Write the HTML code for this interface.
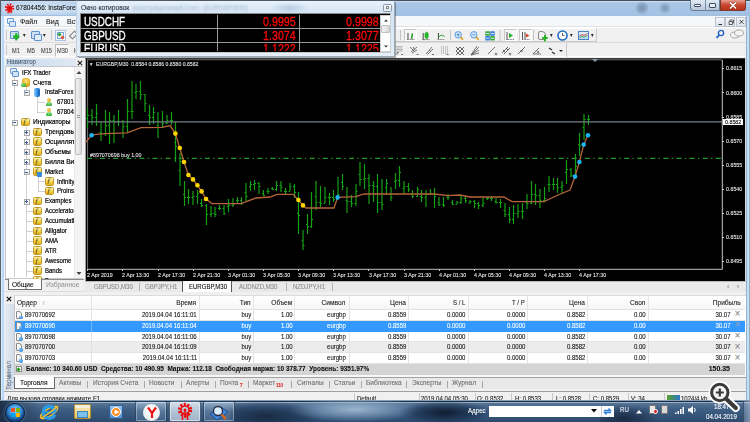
<!DOCTYPE html><html><head><meta charset='utf-8'><style>
*{margin:0;padding:0;box-sizing:border-box}
html,body{width:750px;height:422px;overflow:hidden;background:#b9d1ea;font-family:"Liberation Sans",sans-serif;color:#000}
.a{position:absolute}
.t{position:absolute;white-space:nowrap;font-size:7px;line-height:8px;-webkit-text-stroke:0.1px currentColor}
</style></head><body><div class="a" style="left:0px;top:0px;width:750px;height:17px;background:linear-gradient(#d0e4f8 0,#a8c6e6 12%,#a2c2e4 90%,#9aa5b0 100%);border-top:1px solid #4a4f57"></div>
<div class="a" style="left:2px;top:2px;width:90px;height:13px;background:radial-gradient(ellipse at 45% 50%,rgba(225,238,250,0.85) 0,rgba(215,232,248,0.6) 55%,rgba(200,220,240,0) 100%)"></div>
<div class="a" style="left:0px;top:0px;width:1px;height:422px;background:#5a6068"></div>
<div class="a" style="left:1px;top:16px;width:1px;height:384px;background:#d4eefc"></div>
<div class="a" style="left:2px;top:16px;width:2px;height:384px;background:#b5d8fb"></div>
<div class="a" style="left:746px;top:16px;width:4px;height:384px;background:linear-gradient(90deg,#9ab0c8 0,#9ab0c8 25%,#bde0fc 25%,#bde0fc 75%,#a0aab4 75%)"></div>
<svg class="a" style="left:4px;top:3px" width="11" height="11"><circle cx="5.5" cy="5" r="3.6" fill="none" stroke="#e81010" stroke-width="2.2" stroke-dasharray="1.6 1.2"/><circle cx="5.5" cy="5" r="2.6" fill="#e81010"/><path d="M4 6V10.5M7 6V10.5M5.5 6V9.5" stroke="#e81010" stroke-width="1"/></svg>
<div class="t" style="left:16px;top:4px;font-size:7.6px;color:#111;transform:scaleX(0.85);transform-origin:0 50%;">67804456: InstaForex-Europe.com - Демо Счет - [EURGBP,M30]</div>
<div class="a" style="left:634.8px;top:1px;width:14px;height:14px;background:radial-gradient(circle,rgba(80,100,125,0.55) 0,rgba(90,110,135,0.3) 45%,transparent 72%)"></div>
<div class="a" style="left:659px;top:2px;width:12px;height:12px;background:radial-gradient(circle,rgba(80,100,125,0.5) 0,rgba(90,110,135,0.25) 45%,transparent 72%)"></div>
<div class="a" style="left:690px;top:0px;width:30px;height:11px;background:linear-gradient(#dfe9f4,#b5c8dc);border:1px solid #6d7d91;border-top:none;border-radius:0 0 0 3px"></div>
<div class="a" style="left:705px;top:0px;width:1px;height:11px;background:#7d8ea3"></div>
<div class="a" style="left:694px;top:4px;width:7px;height:3px;border:1px solid #3d4b5c;background:#fff;border-radius:1px"></div>
<div class="a" style="left:709px;top:3px;width:7px;height:5px;border:1px solid #3d4b5c;background:#e8eef5;border-radius:1px"></div>
<div class="a" style="left:720px;top:0px;width:26px;height:11px;background:linear-gradient(#e8a094,#c9462f 50%,#b93318);border:1px solid #7b3a30;border-top:none;border-radius:0 0 3px 0"></div>
<svg class="a" style="left:720px;top:0px" width="26" height="11"><path d="M10 2.5L16 8.5M16 2.5L10 8.5" stroke="#5a2018" stroke-width="2.6" stroke-opacity="0.5"/><path d="M10 2.5L16 8.5M16 2.5L10 8.5" stroke="#fff" stroke-width="1.6"/></svg>
<div class="a" style="left:4px;top:16px;width:742px;height:384px;background:#f0f0f0;border-left:1px solid #a0a8b0;border-right:1px solid #d8dce0"></div>
<div class="a" style="left:4px;top:16px;width:742px;height:11px;background:#f6f7f9;border-bottom:1px solid #dfe3e8"></div>
<div class="a" style="left:7px;top:18px;width:7px;height:6px;border:1px solid #6a9bd8;background:#e6f0fa;border-radius:1px"></div><div class="a" style="left:9px;top:21px;width:7px;height:6px;border:1px solid #6a9bd8;background:#dbe8f7;border-radius:1px"></div>
<div class="t" style="left:20px;top:18px;font-size:7.5px;color:#222;transform:scaleX(0.94);transform-origin:0 50%;">Файл</div>
<div class="t" style="left:46px;top:18px;font-size:7.5px;color:#222;transform:scaleX(0.94);transform-origin:0 50%;">Вид</div>
<div class="t" style="left:67px;top:18px;font-size:7.5px;color:#222;transform:scaleX(0.94);transform-origin:0 50%;">Вставка</div>
<div class="a" style="left:715px;top:17px;width:10px;height:10px;background:linear-gradient(#f6f8fb,#dde4ec);border:1px solid #b9c3cf"></div>
<div class="a" style="left:725px;top:17px;width:10px;height:10px;background:linear-gradient(#f6f8fb,#dde4ec);border:1px solid #b9c3cf"></div>
<div class="a" style="left:736px;top:17px;width:10px;height:10px;background:linear-gradient(#f6f8fb,#dde4ec);border:1px solid #b9c3cf"></div>
<svg class="a" style="left:715px;top:17px" width="31" height="10"><path d="M3.5 7.5H7" stroke="#333" stroke-width="1"/><path d="M14 4.5H17.5V7.5H14ZM15 4.5V3H18.5V6H17.5" stroke="#444" stroke-width="0.8" fill="none"/><path d="M24.5 2.8L28.5 6.8M28.5 2.8L24.5 6.8" stroke="#222" stroke-width="0.9"/></svg>
<div class="a" style="left:4px;top:27px;width:742px;height:30px;background:#f0f0f0"></div>
<div class="a" style="left:4px;top:27px;width:742px;height:1px;background:#fff"></div>
<div class="a" style="left:4px;top:42px;width:742px;height:1px;background:#dcdcdc"></div>
<div class="a" style="left:4px;top:56px;width:742px;height:1px;background:#fff"></div>
<div class="a" style="left:6px;top:30px;width:1px;height:10px;background:#c9c9c9"></div>
<div class="a" style="left:10px;top:31px;width:9px;height:8px;border:1px solid #5b8fd0;background:#cfe0f5;border-radius:1px"></div>
<div class="t" style="left:13px;top:33px;font-size:9px;color:#1fb51f;transform:scaleX(0.86);transform-origin:0 50%;;font-weight:bold">✚</div>
<div class="t" style="left:23px;top:31px;font-size:6px;color:#222;transform:scaleX(0.86);transform-origin:0 50%;">▾</div>
<div class="a" style="left:31px;top:31px;width:9px;height:8px;border:1px solid #5b8fd0;background:#cfe0f5;border-radius:1px"></div>
<div class="a" style="left:34px;top:34px;width:8px;height:7px;border:1px solid #5b8fd0;background:#e1ecf9;border-radius:1px"></div>
<div class="t" style="left:43px;top:31px;font-size:6px;color:#222;transform:scaleX(0.86);transform-origin:0 50%;">▾</div>
<div class="a" style="left:51px;top:30px;width:1px;height:10px;background:#c9c9c9"></div>
<div class="a" style="left:55px;top:30px;width:11px;height:11px;border:1px solid #aac6e6;background:#f7fbff"></div>
<div class="a" style="left:57px;top:32px;width:7px;height:7px;border:1px solid #7aa3d6;background:#f4f8fc"></div>
<div class="a" style="left:58px;top:33px;width:3px;height:3px;background:#2aa02a;transform:rotate(45deg)"></div><div class="a" style="left:61px;top:36px;width:3px;height:3px;background:#e0502a;transform:rotate(45deg)"></div>
<div class="a" style="left:71px;top:31px;width:5px;height:8px;border:1px solid #777;transform:rotate(45deg)"></div>
<div class="a" style="left:6px;top:45px;width:1px;height:10px;background:#c9c9c9"></div>
<div class="t" style="left:12px;top:47px;font-size:6.5px;color:#444;transform:scaleX(0.86);transform-origin:0 50%;">M1</div>
<div class="t" style="left:27px;top:47px;font-size:6.5px;color:#444;transform:scaleX(0.86);transform-origin:0 50%;">M5</div>
<div class="t" style="left:41px;top:47px;font-size:6.5px;color:#444;transform:scaleX(0.86);transform-origin:0 50%;">M15</div>
<div class="a" style="left:55px;top:44px;width:14px;height:13px;border:1px solid #bdbdbd;background:#f8f8f8;border-right-color:#fff;border-bottom-color:#fff"></div>
<div class="t" style="left:57px;top:47px;font-size:6.5px;color:#444;transform:scaleX(0.86);transform-origin:0 50%;">M30</div>
<div class="t" style="left:74px;top:47px;font-size:6.5px;color:#444;transform:scaleX(0.86);transform-origin:0 50%;">H1</div>
<div class="a" style="left:395px;top:28px;width:202px;height:14px;border:1px solid #fff;border-right-color:#c9c9c9;border-bottom-color:#c9c9c9"></div>
<div class="a" style="left:400px;top:30px;width:1px;height:10px;background:#c4c4c4"></div>
<div class="a" style="left:403.6px;top:29.4px;width:13.2px;height:11.2px;border:1px solid #c8c8c8;border-right-color:#fff;border-bottom-color:#fff;background:#f6f6f6"></div>
<svg class="a" style="left:400px;top:27px" width="50" height="16"><path d="M8 6V12.5M23.2 6V13M38.4 6V13" stroke="#444" stroke-width="1"/><path d="M7 12.5H14.5M22.4 12.5H29.6M38 12.5H44.5" stroke="#777" stroke-width="1" stroke-dasharray="1 0.6"/><path d="M11.5 12L12.5 6.5" stroke="#2aa02a" stroke-width="1.6"/><path d="M26.6 4.8L28.2 6.5V10.5L26.6 12L25 10.5V6.5Z" fill="#22c022" stroke="#178a17" stroke-width="0.5"/><path d="M38.5 10.5Q41 6.5 44.5 9.5" stroke="#2aa02a" stroke-width="1" fill="none"/></svg>
<div class="a" style="left:450px;top:30px;width:1px;height:10px;background:#c4c4c4"></div>
<svg class="a" style="left:450px;top:27px" width="80" height="16"><circle cx="8.2" cy="7.8" r="3.2" fill="#d2e8fc" stroke="#4a90d8" stroke-width="0.9"/><path d="M6.8 7.8H9.6M8.2 6.4V9.2" stroke="#3a78c0" stroke-width="0.8"/><path d="M10.5 10.2L13 12.6" stroke="#d8a820" stroke-width="1.8"/><circle cx="23.8" cy="7.8" r="3.2" fill="#d2e8fc" stroke="#4a90d8" stroke-width="0.9"/><path d="M22.4 7.8H25.2" stroke="#3a78c0" stroke-width="0.8"/><path d="M26.1 10.2L28.6 12.6" stroke="#d8a820" stroke-width="1.8"/><rect x="35.3" y="4.3" width="4.6" height="4.4" rx="0.6" fill="#38a848"/><rect x="40.2" y="4.3" width="4.6" height="4.4" rx="0.6" fill="#3a7ed8"/><rect x="35.3" y="9" width="4.6" height="4.4" rx="0.6" fill="#3a7ed8"/><rect x="40.2" y="9" width="4.6" height="4.4" rx="0.6" fill="#38a848"/><path d="M36 6.5H39.2M41 6.5H44.2M36 11.2H39.2M41 11.2H44.2" stroke="#fff" stroke-width="0.8"/><path d="M50 3V14" stroke="#c4c4c4"/></svg>
<div class="a" style="left:503.5px;top:29.4px;width:13px;height:11.2px;border:1px solid #c8c8c8;border-right-color:#fff;border-bottom-color:#fff;background:#f6f6f6"></div>
<div class="a" style="left:518.5px;top:29.4px;width:13px;height:11.2px;border:1px solid #c8c8c8;border-right-color:#fff;border-bottom-color:#fff;background:#f6f6f6"></div>
<svg class="a" style="left:500px;top:27px" width="33" height="16"><path d="M7 5V13M22.5 5V13M25 5V12" stroke="#444" stroke-width="0.9"/><path d="M6.5 12.5H14M22 12.5H29.5" stroke="#777" stroke-width="1" stroke-dasharray="1 0.6"/><path d="M9 6L13 8.5L9 11Z" fill="#22b022"/><path d="M26 6.5L29.5 8.5L26 10.5Z" fill="#e04020"/></svg>
<div class="a" style="left:533px;top:30px;width:1px;height:10px;background:#c4c4c4"></div>
<div class="a" style="left:538px;top:31px;width:8px;height:9px;border:1px solid #8a8a8a;background:#f3f3f3;border-radius:2px 4px 2px 2px"></div>
<div class="t" style="left:542px;top:35px;font-size:8px;color:#22b422;transform:scaleX(0.86);transform-origin:0 50%;;font-weight:bold">✚</div>
<div class="t" style="left:550px;top:31px;font-size:6px;color:#222;transform:scaleX(0.86);transform-origin:0 50%;">▾</div>
<svg class="a" style="left:557px;top:30px" width="11" height="11"><circle cx="5.5" cy="5.5" r="4.5" fill="#fff" stroke="#1d6cc0" stroke-width="1.6"/><path d="M5.5 3V5.5H7.5" stroke="#333" stroke-width="0.8" fill="none"/></svg>
<div class="t" style="left:570px;top:31px;font-size:6px;color:#222;transform:scaleX(0.86);transform-origin:0 50%;">▾</div>
<div class="a" style="left:578px;top:31px;width:11px;height:9px;border:1px solid #4a82c4;background:linear-gradient(#e4f0fb,#b9d8f4)"></div>
<svg class="a" style="left:579px;top:32px" width="9" height="7"><path d="M0.5 4L3 2.5L5 3.5L8.5 1.5" stroke="#d04040" stroke-width="0.9" fill="none"/><path d="M0.5 5.5L3 4.5L5 5.2L8.5 3.5" stroke="#3aa03a" stroke-width="0.9" fill="none"/></svg>
<div class="t" style="left:591px;top:31px;font-size:6px;color:#222;transform:scaleX(0.86);transform-origin:0 50%;">▾</div>
<div class="a" style="left:566px;top:43px;width:1px;height:14px;background:#c9c9c9"></div>
<svg class="a" style="left:394px;top:42px" width="175" height="16"><g fill="none" stroke-width="0.8"><path d="M2 4.5H8.5M2 6H8.5M2 7.5H8.5M2 9H8.5" stroke="#aaa"/><path d="M3 13V10.5H5M7 12L8 13L9 12" stroke="#555"/><path d="M16 5L20 9M19 5L21 8M17 10L23 5M18 11L23 8" stroke="#555"/><path d="M22.5 12L23.5 13L24.5 12" stroke="#444"/><path d="M32 12L38 5M33.5 12.5L39 7M35 8L37 10" stroke="#555"/><path d="M38 12L39 13L40 12" stroke="#444"/><path d="M47.5 4V12M49.5 4V12M51.5 4V12M53.5 4V12" stroke="#b8b8b8"/><path d="M52.5 12L53.5 13L54.5 12" stroke="#444"/><path d="M62 5L70 13M62 9L66 13M66 5L70 9M62 13L70 5M62 9L66 5M66 13L70 9" stroke="#444"/><path d="M77 13L85 5M77 13L85 8M77 13L83 4M77 13L85 11" stroke="#555"/><path d="M94 12L101 5" stroke="#555"/><circle cx="102" cy="12" r="0.9" stroke="#555"/><path d="M108 11L114 5M110 12L116 6M109 8L111 10M112 6L114 8" stroke="#444"/><circle cx="116" cy="12" r="0.9" stroke="#555"/><path d="M124 12L131 5M126 9L129 9" stroke="#444"/><path d="M139 12H147M139 12L145 6" stroke="#555"/><circle cx="144" cy="10" r="0.8" stroke="#555"/><path d="M155 6L158 8M158 10L161 12" stroke="#333" stroke-width="1.3"/></g><path d="M165 8H169L167 10Z" fill="#222"/></svg>
<svg class="a" style="left:715px;top:29px" width="10" height="10"><circle cx="6" cy="4" r="2.6" fill="none" stroke="#1f5fc8" stroke-width="1.4"/><path d="M4.2 6L1.5 8.8" stroke="#1f5fc8" stroke-width="1.8"/></svg>
<svg class="a" style="left:729px;top:28px" width="16" height="12"><ellipse cx="6" cy="7" rx="4.5" ry="3" fill="#f4f4f4" stroke="#999" stroke-width="0.8"/><ellipse cx="10" cy="5" rx="4.5" ry="3" fill="#f4f4f4" stroke="#999" stroke-width="0.8"/></svg>
<div class="a" style="left:4px;top:57px;width:81px;height:235px;background:#f0f0f0"></div>
<div class="a" style="left:6px;top:58.6px;width:70px;height:7.4px;background:linear-gradient(90deg,#c6d8ec,#dfe9f4)"></div>
<div class="t" style="left:7px;top:58px;font-size:7px;color:#4a5a6e;transform:scaleX(0.86);transform-origin:0 50%;">Навигатор</div>
<svg class="a" style="left:77px;top:59.5px" width="6" height="6"><path d="M0.8 0.8L5.2 5.2M5.2 0.8L0.8 5.2" stroke="#222" stroke-width="1.2"/></svg>
<div class="a" style="left:5px;top:66px;width:78px;height:213px;background:#fff;border:1px solid #c8c8c8"></div>
<div class="a" style="left:74px;top:67px;width:9px;height:211px;background:#f4f4f4;border-left:1px solid #eaeaea"></div>
<svg class="a" style="left:76px;top:70px" width="6" height="5"><path d="M0.5 4H5.5L3 1Z" fill="#444"/></svg>
<div class="a" style="left:75px;top:78px;width:7px;height:77px;background:linear-gradient(90deg,#f2f2f2,#dadada);border:1px solid #bdbdbd;border-radius:2px"></div>
<div class="a" style="left:77px;top:115px;width:3px;height:1px;background:#999"></div><div class="a" style="left:77px;top:117px;width:3px;height:1px;background:#999"></div>
<svg class="a" style="left:76px;top:271px" width="6" height="5"><path d="M0.5 1H5.5L3 4Z" fill="#444"/></svg>
<div class="a" style="left:14px;top:77px;width:1px;height:200px;background:#d0d0d0"></div>
<div class="a" style="left:26px;top:87px;width:1px;height:4px;background:#d0d0d0"></div>
<div class="a" style="left:37px;top:97px;width:1px;height:16px;background:#d0d0d0"></div>
<div class="a" style="left:37px;top:102px;width:8px;height:1px;background:#d0d0d0"></div><div class="a" style="left:37px;top:112px;width:8px;height:1px;background:#d0d0d0"></div>
<div class="a" style="left:26px;top:127px;width:1px;height:150px;background:#d0d0d0"></div>
<div class="a" style="left:38px;top:176px;width:1px;height:16px;background:#d0d0d0"></div>
<div class="a" style="left:38px;top:181px;width:7px;height:1px;background:#d0d0d0"></div><div class="a" style="left:38px;top:191px;width:7px;height:1px;background:#d0d0d0"></div>
<div class="a" style="left:26px;top:211px;width:7px;height:1px;background:#d0d0d0"></div>
<div class="a" style="left:26px;top:221px;width:7px;height:1px;background:#d0d0d0"></div>
<div class="a" style="left:26px;top:231px;width:7px;height:1px;background:#d0d0d0"></div>
<div class="a" style="left:26px;top:241px;width:7px;height:1px;background:#d0d0d0"></div>
<div class="a" style="left:26px;top:251px;width:7px;height:1px;background:#d0d0d0"></div>
<div class="a" style="left:26px;top:261px;width:7px;height:1px;background:#d0d0d0"></div>
<div class="a" style="left:26px;top:271px;width:7px;height:1px;background:#d0d0d0"></div>
<div class="a" style="left:5px;top:66px;width:69px;height:213px;overflow:hidden"><div class="a" style="left:-5px;top:-66px;width:80px;height:300px"><div class="a" style="left:10px;top:68.1px;width:7px;height:6px;border:1px solid #6a9bd8;background:#e6f0fa;border-radius:1px"></div><div class="a" style="left:12px;top:71.1px;width:7px;height:6px;border:1px solid #5b8fd0;background:#d3e4f6;border-radius:1px"></div><div class="t" style="left:22px;top:68.6px;font-size:7px;color:#000;transform:scaleX(0.86);transform-origin:0 50%;-webkit-text-stroke:0.2px #000">IFX Trader</div><div class="a" style="left:11.5px;top:80.0px;width:6px;height:6px;border:1px solid #a9a9a9;background:linear-gradient(#fff,#e9ebee)"></div><div class="a" style="left:13px;top:82.5px;width:3px;height:1px;background:#3a5e9a"></div><div class="a" style="left:22px;top:77.5px;width:8px;height:9px;background:radial-gradient(circle at 50% 35%,#ffe680 0,#e6b020 55%,#b07a10 100%);border-radius:3px"></div><div class="a" style="left:20.5px;top:82.5px;width:5px;height:4.5px;background:radial-gradient(circle at 40% 30%,#7fe07f,#1f9a1f);border-radius:50% 50% 40% 40%"></div><div class="t" style="left:33px;top:78.5px;font-size:7px;color:#000;transform:scaleX(0.94);transform-origin:0 50%;-webkit-text-stroke:0.2px #000">Счета</div><div class="a" style="left:23.5px;top:89.9px;width:6px;height:6px;border:1px solid #a9a9a9;background:linear-gradient(#fff,#e9ebee)"></div><div class="a" style="left:25px;top:92.4px;width:3px;height:1px;background:#3a5e9a"></div><div class="a" style="left:34px;top:87.9px;width:6px;height:9.5px;background:linear-gradient(90deg,#8cccff,#2a86e0 60%,#1460b8);border-radius:2px"></div><div class="t" style="left:45px;top:88.4px;font-size:7px;color:#000;transform:scaleX(0.86);transform-origin:0 50%;-webkit-text-stroke:0.2px #000">InstaForex</div><div class="a" style="left:46.5px;top:97.8px;width:4.5px;height:4.5px;background:radial-gradient(circle at 40% 35%,#ffd860,#d09010);border-radius:50%"></div><div class="a" style="left:45.5px;top:101.8px;width:6.5px;height:4.5px;background:radial-gradient(circle at 50% 20%,#8fe88f,#1e9e1e);border-radius:3px 3px 1px 1px"></div><div class="t" style="left:57px;top:98.3px;font-size:7px;color:#000;transform:scaleX(0.86);transform-origin:0 50%;-webkit-text-stroke:0.2px #000">678010</div><div class="a" style="left:46.5px;top:107.7px;width:4.5px;height:4.5px;background:radial-gradient(circle at 40% 35%,#ffd860,#d09010);border-radius:50%"></div><div class="a" style="left:45.5px;top:111.7px;width:6.5px;height:4.5px;background:radial-gradient(circle at 50% 20%,#8fe88f,#1e9e1e);border-radius:3px 3px 1px 1px"></div><div class="t" style="left:57px;top:108.2px;font-size:7px;color:#000;transform:scaleX(0.86);transform-origin:0 50%;-webkit-text-stroke:0.2px #000">67804456</div><div class="a" style="left:11.5px;top:119.6px;width:6px;height:6px;border:1px solid #a9a9a9;background:linear-gradient(#fff,#e9ebee)"></div><div class="a" style="left:13px;top:122.1px;width:3px;height:1px;background:#3a5e9a"></div><div class="a" style="left:21px;top:117.6px;width:8.5px;height:8.5px;background:linear-gradient(#fff3b0,#f0cf40 60%,#e0b020);border:1px solid #c09a28;border-radius:1.5px"></div><div class="t" style="left:23.6px;top:117.89999999999999px;font-size:7px;color:#4a3a00;font-style:italic;font-family:Liberation Serif">f</div><div class="t" style="left:33px;top:118.1px;font-size:7px;color:#000;transform:scaleX(0.94);transform-origin:0 50%;-webkit-text-stroke:0.2px #000">Индикаторы</div><div class="a" style="left:23.5px;top:129.5px;width:6px;height:6px;border:1px solid #a9a9a9;background:linear-gradient(#fff,#e9ebee)"></div><div class="a" style="left:25px;top:132.0px;width:3px;height:1px;background:#3a5e9a"></div><div class="a" style="left:26px;top:131.0px;width:1px;height:3px;background:#3a5e9a"></div><div class="a" style="left:33px;top:127.5px;width:8.5px;height:8.5px;background:linear-gradient(#fff3b0,#f0cf40 60%,#e0b020);border:1px solid #c09a28;border-radius:1.5px"></div><div class="t" style="left:35.6px;top:127.8px;font-size:7px;color:#4a3a00;font-style:italic;font-family:Liberation Serif">f</div><div class="t" style="left:45px;top:128.0px;font-size:7px;color:#000;transform:scaleX(0.94);transform-origin:0 50%;-webkit-text-stroke:0.2px #000">Трендовые</div><div class="a" style="left:23.5px;top:139.4px;width:6px;height:6px;border:1px solid #a9a9a9;background:linear-gradient(#fff,#e9ebee)"></div><div class="a" style="left:25px;top:141.9px;width:3px;height:1px;background:#3a5e9a"></div><div class="a" style="left:26px;top:140.9px;width:1px;height:3px;background:#3a5e9a"></div><div class="a" style="left:33px;top:137.4px;width:8.5px;height:8.5px;background:linear-gradient(#fff3b0,#f0cf40 60%,#e0b020);border:1px solid #c09a28;border-radius:1.5px"></div><div class="t" style="left:35.6px;top:137.70000000000002px;font-size:7px;color:#4a3a00;font-style:italic;font-family:Liberation Serif">f</div><div class="t" style="left:45px;top:137.9px;font-size:7px;color:#000;transform:scaleX(0.94);transform-origin:0 50%;-webkit-text-stroke:0.2px #000">Осцилляторы</div><div class="a" style="left:23.5px;top:149.3px;width:6px;height:6px;border:1px solid #a9a9a9;background:linear-gradient(#fff,#e9ebee)"></div><div class="a" style="left:25px;top:151.8px;width:3px;height:1px;background:#3a5e9a"></div><div class="a" style="left:26px;top:150.8px;width:1px;height:3px;background:#3a5e9a"></div><div class="a" style="left:33px;top:147.3px;width:8.5px;height:8.5px;background:linear-gradient(#fff3b0,#f0cf40 60%,#e0b020);border:1px solid #c09a28;border-radius:1.5px"></div><div class="t" style="left:35.6px;top:147.60000000000002px;font-size:7px;color:#4a3a00;font-style:italic;font-family:Liberation Serif">f</div><div class="t" style="left:45px;top:147.8px;font-size:7px;color:#000;transform:scaleX(0.94);transform-origin:0 50%;-webkit-text-stroke:0.2px #000">Объемы</div><div class="a" style="left:23.5px;top:159.2px;width:6px;height:6px;border:1px solid #a9a9a9;background:linear-gradient(#fff,#e9ebee)"></div><div class="a" style="left:25px;top:161.7px;width:3px;height:1px;background:#3a5e9a"></div><div class="a" style="left:26px;top:160.7px;width:1px;height:3px;background:#3a5e9a"></div><div class="a" style="left:33px;top:157.2px;width:8.5px;height:8.5px;background:linear-gradient(#fff3b0,#f0cf40 60%,#e0b020);border:1px solid #c09a28;border-radius:1.5px"></div><div class="t" style="left:35.6px;top:157.5px;font-size:7px;color:#4a3a00;font-style:italic;font-family:Liberation Serif">f</div><div class="t" style="left:45px;top:157.7px;font-size:7px;color:#000;transform:scaleX(0.94);transform-origin:0 50%;-webkit-text-stroke:0.2px #000">Билла Вильямса</div><div class="a" style="left:23.5px;top:169.1px;width:6px;height:6px;border:1px solid #a9a9a9;background:linear-gradient(#fff,#e9ebee)"></div><div class="a" style="left:25px;top:171.6px;width:3px;height:1px;background:#3a5e9a"></div><div class="a" style="left:33px;top:167.1px;width:8.5px;height:8.5px;background:linear-gradient(#fff3b0,#f0cf40 60%,#e0b020);border:1px solid #c09a28;border-radius:1.5px"></div><div class="t" style="left:35.6px;top:167.4px;font-size:7px;color:#4a3a00;font-style:italic;font-family:Liberation Serif">f</div><div class="a" style="left:37px;top:171.6px;width:5px;height:5px;background:#3a88d8;border-radius:1px"></div><div class="t" style="left:45px;top:167.6px;font-size:7px;color:#000;transform:scaleX(0.86);transform-origin:0 50%;-webkit-text-stroke:0.2px #000">Market</div><div class="a" style="left:45px;top:177.0px;width:8.5px;height:8.5px;background:linear-gradient(#fff3b0,#f0cf40 60%,#e0b020);border:1px solid #c09a28;border-radius:1.5px"></div><div class="t" style="left:47.6px;top:177.3px;font-size:7px;color:#4a3a00;font-style:italic;font-family:Liberation Serif">f</div><div class="t" style="left:57px;top:177.5px;font-size:7px;color:#000;transform:scaleX(0.86);transform-origin:0 50%;-webkit-text-stroke:0.2px #000">Infinity</div><div class="a" style="left:45px;top:186.9px;width:8.5px;height:8.5px;background:linear-gradient(#fff3b0,#f0cf40 60%,#e0b020);border:1px solid #c09a28;border-radius:1.5px"></div><div class="t" style="left:47.6px;top:187.20000000000002px;font-size:7px;color:#4a3a00;font-style:italic;font-family:Liberation Serif">f</div><div class="t" style="left:57px;top:187.4px;font-size:7px;color:#000;transform:scaleX(0.86);transform-origin:0 50%;-webkit-text-stroke:0.2px #000">Proinside</div><div class="a" style="left:23.5px;top:198.8px;width:6px;height:6px;border:1px solid #a9a9a9;background:linear-gradient(#fff,#e9ebee)"></div><div class="a" style="left:25px;top:201.3px;width:3px;height:1px;background:#3a5e9a"></div><div class="a" style="left:26px;top:200.3px;width:1px;height:3px;background:#3a5e9a"></div><div class="a" style="left:33px;top:196.8px;width:8.5px;height:8.5px;background:linear-gradient(#fff3b0,#f0cf40 60%,#e0b020);border:1px solid #c09a28;border-radius:1.5px"></div><div class="t" style="left:35.6px;top:197.10000000000002px;font-size:7px;color:#4a3a00;font-style:italic;font-family:Liberation Serif">f</div><div class="t" style="left:45px;top:197.3px;font-size:7px;color:#000;transform:scaleX(0.86);transform-origin:0 50%;-webkit-text-stroke:0.2px #000">Examples</div><div class="a" style="left:33px;top:206.7px;width:8.5px;height:8.5px;background:linear-gradient(#fff3b0,#f0cf40 60%,#e0b020);border:1px solid #c09a28;border-radius:1.5px"></div><div class="t" style="left:35.6px;top:207.0px;font-size:7px;color:#4a3a00;font-style:italic;font-family:Liberation Serif">f</div><div class="t" style="left:45px;top:207.2px;font-size:7px;color:#000;transform:scaleX(0.86);transform-origin:0 50%;-webkit-text-stroke:0.2px #000">Accelerator</div><div class="a" style="left:33px;top:216.6px;width:8.5px;height:8.5px;background:linear-gradient(#fff3b0,#f0cf40 60%,#e0b020);border:1px solid #c09a28;border-radius:1.5px"></div><div class="t" style="left:35.6px;top:216.9px;font-size:7px;color:#4a3a00;font-style:italic;font-family:Liberation Serif">f</div><div class="t" style="left:45px;top:217.1px;font-size:7px;color:#000;transform:scaleX(0.86);transform-origin:0 50%;-webkit-text-stroke:0.2px #000">Accumulation</div><div class="a" style="left:33px;top:226.5px;width:8.5px;height:8.5px;background:linear-gradient(#fff3b0,#f0cf40 60%,#e0b020);border:1px solid #c09a28;border-radius:1.5px"></div><div class="t" style="left:35.6px;top:226.8px;font-size:7px;color:#4a3a00;font-style:italic;font-family:Liberation Serif">f</div><div class="t" style="left:45px;top:227.0px;font-size:7px;color:#000;transform:scaleX(0.86);transform-origin:0 50%;-webkit-text-stroke:0.2px #000">Alligator</div><div class="a" style="left:33px;top:236.4px;width:8.5px;height:8.5px;background:linear-gradient(#fff3b0,#f0cf40 60%,#e0b020);border:1px solid #c09a28;border-radius:1.5px"></div><div class="t" style="left:35.6px;top:236.70000000000002px;font-size:7px;color:#4a3a00;font-style:italic;font-family:Liberation Serif">f</div><div class="t" style="left:45px;top:236.9px;font-size:7px;color:#000;transform:scaleX(0.86);transform-origin:0 50%;-webkit-text-stroke:0.2px #000">AMA</div><div class="a" style="left:33px;top:246.3px;width:8.5px;height:8.5px;background:linear-gradient(#fff3b0,#f0cf40 60%,#e0b020);border:1px solid #c09a28;border-radius:1.5px"></div><div class="t" style="left:35.6px;top:246.60000000000002px;font-size:7px;color:#4a3a00;font-style:italic;font-family:Liberation Serif">f</div><div class="t" style="left:45px;top:246.8px;font-size:7px;color:#000;transform:scaleX(0.86);transform-origin:0 50%;-webkit-text-stroke:0.2px #000">ATR</div><div class="a" style="left:33px;top:256.2px;width:8.5px;height:8.5px;background:linear-gradient(#fff3b0,#f0cf40 60%,#e0b020);border:1px solid #c09a28;border-radius:1.5px"></div><div class="t" style="left:35.6px;top:256.5px;font-size:7px;color:#4a3a00;font-style:italic;font-family:Liberation Serif">f</div><div class="t" style="left:45px;top:256.7px;font-size:7px;color:#000;transform:scaleX(0.86);transform-origin:0 50%;-webkit-text-stroke:0.2px #000">Awesome</div><div class="a" style="left:33px;top:266.1px;width:8.5px;height:8.5px;background:linear-gradient(#fff3b0,#f0cf40 60%,#e0b020);border:1px solid #c09a28;border-radius:1.5px"></div><div class="t" style="left:35.6px;top:266.40000000000003px;font-size:7px;color:#4a3a00;font-style:italic;font-family:Liberation Serif">f</div><div class="t" style="left:45px;top:266.6px;font-size:7px;color:#000;transform:scaleX(0.86);transform-origin:0 50%;-webkit-text-stroke:0.2px #000">Bands</div><div class="a" style="left:33px;top:276.0px;width:8.5px;height:8.5px;background:linear-gradient(#fff3b0,#f0cf40 60%,#e0b020);border:1px solid #c09a28;border-radius:1.5px"></div><div class="t" style="left:35.6px;top:276.3px;font-size:7px;color:#4a3a00;font-style:italic;font-family:Liberation Serif">f</div><div class="t" style="left:45px;top:276.5px;font-size:7px;color:#000;transform:scaleX(0.86);transform-origin:0 50%;-webkit-text-stroke:0.2px #000">Bears</div></div></div>
<div class="a" style="left:5px;top:279px;width:79px;height:13px;background:#f0f0f0"></div>
<div class="a" style="left:5px;top:279px;width:79px;height:1px;background:#8c8c8c"></div>
<div class="a" style="left:8px;top:279px;width:34px;height:11px;background:#fff;border:1px solid #6e6e6e;border-top:none;border-right-width:1.5px;border-bottom-width:1.5px"></div>
<div class="t" style="left:12px;top:280.5px;font-size:7px;color:#111;transform:scaleX(0.94);transform-origin:0 50%;">Общие</div>
<div class="t" style="left:46px;top:280.5px;font-size:7px;color:#999;transform:scaleX(0.94);transform-origin:0 50%;">Избранное</div>
<div class="a" style="left:4px;top:291px;width:81px;height:1px;background:#dedede"></div>
<div class="a" style="left:85px;top:57.5px;width:659.5px;height:223.5px;background:#000;border-left:1px solid #a0a0a0;border-top:1px solid #3a3a3a"></div>
<svg class="a" style="left:0;top:0" width="750" height="282"><path d="M87.5 269.5V59.8H722.3" fill="none" stroke="#6a6a6a" stroke-width="1.1"/><path d="M87.5 269.3H722.3" stroke="#c0c0c0" stroke-width="1"/><path d="M87 158.4H722" stroke="#1f9a1f" stroke-width="1.2" stroke-dasharray="5 3.4 1.3 3.4"/><path d="M87.5 108.0V128.0M86.0 118.5H87.5M87.5 115.5H89.0M92.0 109.0V125.0M90.5 115.5H92.0M92.0 117.5H93.5M96.5 104.0V126.0M95.0 117.5H96.5M96.5 113.5H98.0M101.0 122.0V141.0M99.5 132.5H101.0M101.0 133.5H102.5M105.5 110.0V136.0M104.0 133.5H105.5M105.5 125.5H107.0M109.5 112.0V144.0M108.0 125.5H109.5M109.5 120.5H111.0M114.0 115.0V143.0M112.5 120.5H114.0M114.0 121.5H115.5M118.5 110.0V126.0M117.0 121.5H118.5M118.5 121.5H120.0M123.0 120.0V138.0M121.5 121.5H123.0M123.0 126.5H124.5M127.5 99.0V133.0M126.0 126.5H127.5M127.5 111.5H129.0M132.0 81.0V119.0M130.5 111.5H132.0M132.0 111.5H133.5M136.0 84.0V99.0M134.5 92.5H136.0M136.0 91.5H137.5M140.5 81.0V100.0M139.0 91.5H140.5M140.5 94.5H142.0M145.0 94.0V112.0M143.5 94.5H145.0M145.0 103.5H146.5M149.5 105.0V125.0M148.0 115.5H149.5M149.5 117.5H151.0M153.5 107.0V124.0M152.0 117.5H153.5M153.5 112.5H155.0M158.0 112.0V138.0M156.5 125.5H158.0M158.0 127.5H159.5M162.5 111.0V128.0M161.0 127.5H162.5M162.5 123.5H164.0M167.0 115.0V124.0M165.5 123.5H167.0M167.0 120.5H168.5M171.5 112.0V125.0M170.0 120.5H171.5M171.5 120.5H173.0M175.5 122.0V162.0M174.0 142.5H175.5M175.5 146.5H177.0M180.0 153.0V186.0M178.5 170.5H180.0M180.0 161.5H181.5M184.5 181.0V206.0M183.0 194.5H184.5M184.5 197.5H186.0M188.5 189.0V204.0M187.0 197.5H188.5M188.5 197.5H190.0M193.0 191.0V205.0M191.5 197.5H193.0M193.0 196.5H194.5M197.5 190.0V204.0M196.0 196.5H197.5M197.5 193.5H199.0M201.5 199.0V207.0M200.0 203.5H201.5M201.5 205.5H203.0M206.5 204.0V225.0M205.0 205.5H206.5M206.5 214.5H208.0M211.0 206.0V217.0M209.5 214.5H211.0M211.0 213.5H212.5M215.0 207.0V217.0M213.5 213.5H215.0M215.0 214.5H216.5M219.5 205.0V210.0M218.0 208.5H219.5M219.5 208.5H221.0M224.0 205.0V215.0M222.5 208.5H224.0M224.0 213.5H225.5M228.5 199.0V212.0M227.0 206.5H228.5M228.5 205.5H230.0M233.0 198.0V207.0M231.5 205.5H233.0M233.0 204.5H234.5M237.5 197.0V204.0M236.0 200.5H237.5M237.5 200.5H239.0M241.5 197.0V205.0M240.0 200.5H241.5M241.5 203.5H243.0M246.0 183.0V201.0M244.5 192.5H246.0M246.0 196.5H247.5M250.5 181.0V191.0M249.0 186.5H250.5M250.5 184.5H252.0M254.5 180.0V190.0M253.0 184.5H254.5M254.5 183.5H256.0M259.0 182.0V194.0M257.5 183.5H259.0M259.0 186.5H260.5M263.5 190.0V196.0M262.0 193.5H263.5M263.5 195.5H265.0M268.0 188.0V194.0M266.5 191.5H268.0M268.0 191.5H269.5M272.5 187.0V190.0M271.0 188.5H272.5M272.5 189.5H274.0M276.5 181.0V191.0M275.0 189.5H276.5M276.5 185.5H278.0M281.0 181.0V192.0M279.5 185.5H281.0M281.0 187.5H282.5M285.5 188.0V194.0M284.0 191.5H285.5M285.5 191.5H287.0M290.0 183.0V191.0M288.5 191.5H290.0M290.0 186.5H291.5M294.5 184.0V198.0M293.0 186.5H294.5M294.5 192.5H296.0M298.5 192.0V234.0M297.0 213.5H298.5M298.5 215.5H300.0M303.0 230.0V250.0M301.5 240.5H303.0M303.0 245.5H304.5M307.5 214.0V234.0M306.0 224.5H307.5M307.5 226.5H309.0M311.5 192.0V228.0M310.0 226.5H311.5M311.5 219.5H313.0M316.0 181.0V210.0M314.5 196.5H316.0M316.0 202.5H317.5M320.5 186.0V207.0M319.0 202.5H320.5M320.5 203.5H322.0M325.0 187.0V203.0M323.5 203.5H325.0M325.0 197.5H326.5M329.5 193.0V205.0M328.0 197.5H329.5M329.5 197.5H331.0M333.5 190.0V202.0M332.0 197.5H333.5M333.5 199.5H335.0M338.0 177.0V199.0M336.5 199.5H338.0M338.0 194.5H339.5M342.5 174.0V190.0M341.0 182.5H342.5M342.5 186.5H344.0M347.0 187.0V213.0M345.5 200.5H347.0M347.0 201.5H348.5M351.5 195.0V207.0M350.0 201.5H351.5M351.5 203.5H353.0M356.0 184.0V206.0M354.5 203.5H356.0M356.0 191.5H357.5M360.0 162.0V186.0M358.5 174.5H360.0M360.0 179.5H361.5M364.5 164.0V189.0M363.0 179.5H364.5M364.5 178.5H366.0M369.0 174.0V204.0M367.5 178.5H369.0M369.0 185.5H370.5M373.5 181.0V202.0M372.0 185.5H373.5M373.5 186.5H375.0M377.5 174.0V213.0M376.0 186.5H377.5M377.5 202.5H379.0M382.0 179.0V210.0M380.5 202.5H382.0M382.0 204.5H383.5M386.5 179.0V195.0M385.0 187.5H386.5M386.5 183.5H388.0M391.0 187.0V201.0M389.5 194.5H391.0M391.0 197.5H392.5M395.5 173.0V189.0M394.0 181.5H395.5M395.5 180.5H397.0M399.5 166.0V187.0M398.0 180.5H399.5M399.5 172.5H401.0M404.0 181.0V194.0M402.5 188.5H404.0M404.0 186.5H405.5M408.5 183.0V192.0M407.0 186.5H408.5M408.5 189.5H410.0M412.5 190.0V198.0M411.0 194.5H412.5M412.5 196.5H414.0M417.5 187.0V197.0M416.0 196.5H417.5M417.5 189.5H419.0M421.5 190.0V202.0M420.0 196.5H421.5M421.5 197.5H423.0M426.0 190.0V207.0M424.5 197.5H426.0M426.0 194.5H427.5M430.5 189.0V195.0M429.0 194.5H430.5M430.5 193.5H432.0M434.5 188.0V208.0M433.0 193.5H434.5M434.5 196.5H436.0M439.0 197.0V206.0M437.5 202.5H439.0M439.0 204.5H440.5M443.5 197.0V207.0M442.0 204.5H443.5M443.5 205.5H445.0M448.0 194.0V200.0M446.5 197.5H448.0M448.0 197.5H449.5M452.5 200.0V205.0M451.0 202.5H452.5M452.5 204.5H454.0M457.0 201.0V204.0M455.5 204.5H457.0M457.0 202.5H458.5M461.0 196.0V204.0M459.5 202.5H461.0M461.0 198.5H462.5M465.5 196.0V203.0M464.0 198.5H465.5M465.5 200.5H467.0M470.0 200.0V204.0M468.5 202.5H470.0M470.0 201.5H471.5M474.5 200.0V208.0M473.0 201.5H474.5M474.5 203.5H476.0M478.5 202.0V209.0M477.0 203.5H478.5M478.5 205.5H480.0M483.0 198.0V207.0M481.5 205.5H483.0M483.0 203.5H484.5M487.5 197.0V200.0M486.0 198.5H487.5M487.5 198.5H489.0M491.5 197.0V201.0M490.0 198.5H491.5M491.5 198.5H493.0M496.0 198.0V204.0M494.5 201.5H496.0M496.0 202.5H497.5M500.5 199.0V208.0M499.0 202.5H500.5M500.5 202.5H502.0M505.0 203.0V217.0M503.5 210.5H505.0M505.0 214.5H506.5M509.5 207.0V223.0M508.0 214.5H509.5M509.5 219.5H511.0M513.5 205.0V224.0M512.0 219.5H513.5M513.5 213.5H515.0M518.0 204.0V218.0M516.5 213.5H518.0M518.0 211.5H519.5M522.5 203.0V219.0M521.0 211.5H522.5M522.5 211.5H524.0M527.0 194.0V209.0M525.5 202.5H527.0M527.0 203.5H528.5M531.5 181.0V204.0M530.0 203.5H531.5M531.5 194.5H533.0M535.5 184.0V205.0M534.0 194.5H535.5M535.5 195.5H537.0M540.0 189.0V208.0M538.5 195.5H540.0M540.0 200.5H541.5M544.5 187.0V201.0M543.0 200.5H544.5M544.5 198.5H546.0M549.0 176.0V192.0M547.5 184.5H549.0M549.0 184.5H550.5M553.5 178.0V190.0M552.0 184.5H553.5M553.5 184.5H555.0M557.5 178.0V193.0M556.0 184.5H557.5M557.5 187.5H559.0M562.0 181.0V193.0M560.5 187.5H562.0M562.0 185.5H563.5M566.5 160.0V184.0M565.0 172.5H566.5M566.5 169.5H568.0M571.0 168.0V177.0M569.5 169.5H571.0M571.0 175.5H572.5M575.5 154.0V178.0M574.0 175.5H575.5M575.5 166.5H577.0M579.5 133.0V156.0M578.0 144.5H579.5M579.5 145.5H581.0M584.0 114.0V140.0M582.5 127.5H584.0M584.0 119.5H585.5M588.5 115.0V125.0M587.0 119.5H588.5M588.5 119.5H590.0" stroke="#14a014" stroke-width="1.2" fill="none"/>
<polyline points="86,142 91.6,135.2 96,134.4 106,133.6 127,132.8 141,127.6 162,127.4 170,125.6 175.4,133.6 179.8,148 184,162 188.4,175 193,179.4 197.4,185.2 201.6,191.4 206,199 212,203.6 241,203.6 256,198 270,197 277,194.4 293,194.4 298.4,200 303,205.4 306,208 334,208 337.6,197.4 356,196.6 364,194 434,194 448,195.6 460,195 470,197 504,197 512,201.6 544,201.6 558,195 570,190 575,176.6 579.4,162 583.7,144.6 588,135.3" fill="none" stroke="#b5643a" stroke-width="1.3"/>
<circle cx="175.4" cy="133.6" r="2.3" fill="#ffd400"/>
<circle cx="179.8" cy="148" r="2.3" fill="#ffd400"/>
<circle cx="184" cy="162" r="2.3" fill="#ffd400"/>
<circle cx="188.4" cy="175" r="2.3" fill="#ffd400"/>
<circle cx="193" cy="179.4" r="2.3" fill="#ffd400"/>
<circle cx="197.4" cy="185.2" r="2.3" fill="#ffd400"/>
<circle cx="201.6" cy="191.4" r="2.3" fill="#ffd400"/>
<circle cx="206" cy="199" r="2.3" fill="#ffd400"/>
<circle cx="298.4" cy="200" r="2.3" fill="#ffd400"/>
<circle cx="303" cy="205.4" r="2.3" fill="#ffd400"/>
<circle cx="91.6" cy="135.2" r="2.3" fill="#1cb4f4"/>
<circle cx="337.6" cy="197.4" r="2.3" fill="#1cb4f4"/>
<circle cx="575" cy="176.6" r="2.3" fill="#1cb4f4"/>
<circle cx="579.4" cy="162" r="2.3" fill="#1cb4f4"/>
<circle cx="583.7" cy="144.6" r="2.3" fill="#1cb4f4"/>
<circle cx="588" cy="135.3" r="2.3" fill="#1cb4f4"/><path d="M87 121.9H722.5" stroke="#77808a" stroke-width="1.3"/><path d="M722.3 60V269.5" stroke="#c8c8c8" stroke-width="1"/><path d="M592 59H598L595 62Z" fill="#8a9aaa"/></svg>
<div class="t" style="left:89px;top:60.400000000000006px;font-size:5px;color:#ddd;transform:scaleX(0.86);transform-origin:0 50%;">▼</div>
<div class="t" style="left:96px;top:60.400000000000006px;font-size:6.2px;color:#e8e8e8;transform:scaleX(0.83);transform-origin:0 50%;">EURGBP,M30&nbsp; 0.8584 0.8586 0.8580 0.8582</div>
<div class="t" style="left:90px;top:151.4px;font-size:6.2px;color:#e0e0e0;transform:scaleX(0.86);transform-origin:0 50%;">#897070698 buy 1.00</div>
<div class="a" style="left:722px;top:68px;width:2px;height:1px;background:#c8c8c8"></div>
<div class="t" style="left:725.5px;top:64.4px;font-size:6.2px;color:#e6e6e6;transform:scaleX(0.86);transform-origin:0 50%;">0.8615</div>
<div class="a" style="left:722px;top:92px;width:2px;height:1px;background:#c8c8c8"></div>
<div class="t" style="left:725.5px;top:88.5px;font-size:6.2px;color:#e6e6e6;transform:scaleX(0.86);transform-origin:0 50%;">0.8600</div>
<div class="a" style="left:722px;top:117px;width:2px;height:1px;background:#c8c8c8"></div>
<div class="t" style="left:725.5px;top:112.60000000000001px;font-size:6.2px;color:#e6e6e6;transform:scaleX(0.86);transform-origin:0 50%;">0.8585</div>
<div class="a" style="left:722px;top:141px;width:2px;height:1px;background:#c8c8c8"></div>
<div class="t" style="left:725.5px;top:136.70000000000002px;font-size:6.2px;color:#e6e6e6;transform:scaleX(0.86);transform-origin:0 50%;">0.8570</div>
<div class="a" style="left:722px;top:165px;width:2px;height:1px;background:#c8c8c8"></div>
<div class="t" style="left:725.5px;top:160.8px;font-size:6.2px;color:#e6e6e6;transform:scaleX(0.86);transform-origin:0 50%;">0.8555</div>
<div class="a" style="left:722px;top:189px;width:2px;height:1px;background:#c8c8c8"></div>
<div class="t" style="left:725.5px;top:184.9px;font-size:6.2px;color:#e6e6e6;transform:scaleX(0.86);transform-origin:0 50%;">0.8540</div>
<div class="a" style="left:722px;top:213px;width:2px;height:1px;background:#c8c8c8"></div>
<div class="t" style="left:725.5px;top:209.00000000000003px;font-size:6.2px;color:#e6e6e6;transform:scaleX(0.86);transform-origin:0 50%;">0.8525</div>
<div class="a" style="left:722px;top:237px;width:2px;height:1px;background:#c8c8c8"></div>
<div class="t" style="left:725.5px;top:233.10000000000002px;font-size:6.2px;color:#e6e6e6;transform:scaleX(0.86);transform-origin:0 50%;">0.8510</div>
<div class="a" style="left:722px;top:261px;width:2px;height:1px;background:#c8c8c8"></div>
<div class="t" style="left:725.5px;top:257.20000000000005px;font-size:6.2px;color:#e6e6e6;transform:scaleX(0.86);transform-origin:0 50%;">0.8495</div>
<div class="a" style="left:723px;top:119.2px;width:20px;height:5.5px;background:#fff"></div>
<div class="t" style="left:725px;top:117.9px;font-size:6.2px;color:#000;transform:scaleX(0.86);transform-origin:0 50%;">0.8582</div>
<div class="a" style="left:87px;top:269px;width:1px;height:2px;background:#c8c8c8"></div>
<div class="t" style="left:87.3px;top:270.7px;font-size:6.2px;color:#e6e6e6;transform:scaleX(0.86);transform-origin:0 50%;">2 Apr 2019</div>
<div class="a" style="left:122px;top:269px;width:1px;height:2px;background:#c8c8c8"></div>
<div class="t" style="left:122.44999999999999px;top:270.7px;font-size:6.2px;color:#e6e6e6;transform:scaleX(0.86);transform-origin:0 50%;">2 Apr 13:30</div>
<div class="a" style="left:158px;top:269px;width:1px;height:2px;background:#c8c8c8"></div>
<div class="t" style="left:157.6px;top:270.7px;font-size:6.2px;color:#e6e6e6;transform:scaleX(0.86);transform-origin:0 50%;">2 Apr 17:30</div>
<div class="a" style="left:193px;top:269px;width:1px;height:2px;background:#c8c8c8"></div>
<div class="t" style="left:192.75px;top:270.7px;font-size:6.2px;color:#e6e6e6;transform:scaleX(0.86);transform-origin:0 50%;">2 Apr 21:30</div>
<div class="a" style="left:228px;top:269px;width:1px;height:2px;background:#c8c8c8"></div>
<div class="t" style="left:227.89999999999998px;top:270.7px;font-size:6.2px;color:#e6e6e6;transform:scaleX(0.86);transform-origin:0 50%;">3 Apr 01:30</div>
<div class="a" style="left:263px;top:269px;width:1px;height:2px;background:#c8c8c8"></div>
<div class="t" style="left:263.05px;top:270.7px;font-size:6.2px;color:#e6e6e6;transform:scaleX(0.86);transform-origin:0 50%;">3 Apr 05:30</div>
<div class="a" style="left:298px;top:269px;width:1px;height:2px;background:#c8c8c8"></div>
<div class="t" style="left:298.2px;top:270.7px;font-size:6.2px;color:#e6e6e6;transform:scaleX(0.86);transform-origin:0 50%;">3 Apr 09:30</div>
<div class="a" style="left:333px;top:269px;width:1px;height:2px;background:#c8c8c8"></div>
<div class="t" style="left:333.34999999999997px;top:270.7px;font-size:6.2px;color:#e6e6e6;transform:scaleX(0.86);transform-origin:0 50%;">3 Apr 13:30</div>
<div class="a" style="left:368px;top:269px;width:1px;height:2px;background:#c8c8c8"></div>
<div class="t" style="left:368.5px;top:270.7px;font-size:6.2px;color:#e6e6e6;transform:scaleX(0.86);transform-origin:0 50%;">3 Apr 17:30</div>
<div class="a" style="left:404px;top:269px;width:1px;height:2px;background:#c8c8c8"></div>
<div class="t" style="left:403.65px;top:270.7px;font-size:6.2px;color:#e6e6e6;transform:scaleX(0.86);transform-origin:0 50%;">3 Apr 21:30</div>
<div class="a" style="left:439px;top:269px;width:1px;height:2px;background:#c8c8c8"></div>
<div class="t" style="left:438.8px;top:270.7px;font-size:6.2px;color:#e6e6e6;transform:scaleX(0.86);transform-origin:0 50%;">4 Apr 01:30</div>
<div class="a" style="left:474px;top:269px;width:1px;height:2px;background:#c8c8c8"></div>
<div class="t" style="left:473.95px;top:270.7px;font-size:6.2px;color:#e6e6e6;transform:scaleX(0.86);transform-origin:0 50%;">4 Apr 05:30</div>
<div class="a" style="left:509px;top:269px;width:1px;height:2px;background:#c8c8c8"></div>
<div class="t" style="left:509.09999999999997px;top:270.7px;font-size:6.2px;color:#e6e6e6;transform:scaleX(0.86);transform-origin:0 50%;">4 Apr 09:30</div>
<div class="a" style="left:544px;top:269px;width:1px;height:2px;background:#c8c8c8"></div>
<div class="t" style="left:544.25px;top:270.7px;font-size:6.2px;color:#e6e6e6;transform:scaleX(0.86);transform-origin:0 50%;">4 Apr 13:30</div>
<div class="a" style="left:579px;top:269px;width:1px;height:2px;background:#c8c8c8"></div>
<div class="t" style="left:579.4px;top:270.7px;font-size:6.2px;color:#e6e6e6;transform:scaleX(0.86);transform-origin:0 50%;">4 Apr 17:30</div>
<div class="a" style="left:85px;top:281px;width:661px;height:11px;background:#e9e9e9;border-top:1px solid #b9b9b9"></div>
<div class="a" style="left:182px;top:281px;width:50px;height:12px;background:#fff;border:1px solid #555;border-top:none"></div>
<div class="t" style="left:94px;top:283px;font-size:7px;color:#8a8a8a;transform:scaleX(0.86);transform-origin:0 50%;">GBPUSD,M30</div>
<div class="t" style="left:145px;top:283px;font-size:7px;color:#8a8a8a;transform:scaleX(0.86);transform-origin:0 50%;">GBPJPY,H1</div>
<div class="t" style="left:188.6px;top:283px;font-size:7px;color:#111;transform:scaleX(0.86);transform-origin:0 50%;">EURGBP,M30</div>
<div class="t" style="left:239px;top:283px;font-size:7px;color:#8a8a8a;transform:scaleX(0.86);transform-origin:0 50%;">AUDNZD,M30</div>
<div class="t" style="left:292.5px;top:283px;font-size:7px;color:#8a8a8a;transform:scaleX(0.86);transform-origin:0 50%;">NZDJPY,H1</div>
<div class="a" style="left:139px;top:283px;width:1px;height:8px;background:#b0b0b0"></div>
<div class="a" style="left:286px;top:283px;width:1px;height:8px;background:#b0b0b0"></div>
<div class="a" style="left:331.5px;top:283px;width:1px;height:8px;background:#b0b0b0"></div>
<div class="t" style="left:727px;top:282.5px;font-size:8px;color:#888;transform:scaleX(0.86);transform-origin:0 50%;">‹</div>
<div class="t" style="left:737px;top:282.5px;font-size:8px;color:#888;transform:scaleX(0.86);transform-origin:0 50%;">›</div>
<div class="a" style="left:4px;top:292px;width:742px;height:100px;background:#f0f0f0"></div>
<svg class="a" style="left:5.5px;top:295.5px" width="6" height="6"><path d="M0.8 0.8L5.2 5.2M5.2 0.8L0.8 5.2" stroke="#111" stroke-width="1.2"/></svg>
<div class="a" style="left:5px;top:304px;width:9px;height:86px;background:linear-gradient(90deg,#e4eaf1,#d3dde8)"></div>
<div class="t" style="left:5px;top:389.5px;font-size:7px;line-height:8px;color:#5d6e82;transform:rotate(-90deg) scaleX(0.9);transform-origin:left top">Терминал</div>
<div class="a" style="left:14px;top:295px;width:732px;height:80px;background:#fff;border-left:1px solid #c8c8c8;border-top:1px solid #dcdcdc"></div>
<div class="a" style="left:15px;top:296px;width:730px;height:14px;background:linear-gradient(#fff,#f6f6f6);border-bottom:1px solid #e2e2e2"></div>
<div class="a" style="left:91px;top:296px;width:1px;height:14px;background:#e5e5e5"></div>
<div class="a" style="left:199px;top:296px;width:1px;height:14px;background:#e5e5e5"></div>
<div class="a" style="left:253px;top:296px;width:1px;height:14px;background:#e5e5e5"></div>
<div class="a" style="left:294px;top:296px;width:1px;height:14px;background:#e5e5e5"></div>
<div class="a" style="left:348.5px;top:296px;width:1px;height:14px;background:#e5e5e5"></div>
<div class="a" style="left:408px;top:296px;width:1px;height:14px;background:#e5e5e5"></div>
<div class="a" style="left:468px;top:296px;width:1px;height:14px;background:#e5e5e5"></div>
<div class="a" style="left:527px;top:296px;width:1px;height:14px;background:#e5e5e5"></div>
<div class="a" style="left:587px;top:296px;width:1px;height:14px;background:#e5e5e5"></div>
<div class="a" style="left:647.5px;top:296px;width:1px;height:14px;background:#e5e5e5"></div>
<div class="t" style="left:16.8px;top:299px;font-size:7px;color:#222;transform:scaleX(0.94);transform-origin:0 50%;">Ордер</div>
<div class="t" style="right:554px;top:299px;font-size:7px;color:#222;transform:scaleX(0.94);transform-origin:100% 50%;">Время</div>
<div class="t" style="right:499.6px;top:299px;font-size:7px;color:#222;transform:scaleX(0.94);transform-origin:100% 50%;">Тип</div>
<div class="t" style="right:458px;top:299px;font-size:7px;color:#222;transform:scaleX(0.94);transform-origin:100% 50%;">Объем</div>
<div class="t" style="right:404.3px;top:299px;font-size:7px;color:#222;transform:scaleX(0.94);transform-origin:100% 50%;">Символ</div>
<div class="t" style="right:344.3px;top:299px;font-size:7px;color:#222;transform:scaleX(0.94);transform-origin:100% 50%;">Цена</div>
<div class="t" style="right:285px;top:299px;font-size:7px;color:#222;transform:scaleX(0.86);transform-origin:100% 50%;">S / L</div>
<div class="t" style="right:225.29999999999995px;top:299px;font-size:7px;color:#222;transform:scaleX(0.86);transform-origin:100% 50%;">T / P</div>
<div class="t" style="right:164.70000000000005px;top:299px;font-size:7px;color:#222;transform:scaleX(0.94);transform-origin:100% 50%;">Цена</div>
<div class="t" style="right:104.70000000000005px;top:299px;font-size:7px;color:#222;transform:scaleX(0.94);transform-origin:100% 50%;">Своп</div>
<div class="t" style="right:9.700000000000045px;top:299px;font-size:7px;color:#222;transform:scaleX(0.94);transform-origin:100% 50%;">Прибыль</div>
<div class="t" style="left:43px;top:299px;font-size:6px;color:#999;transform:scaleX(0.86);transform-origin:0 50%;">/</div>
<div class="a" style="left:15px;top:310px;width:730px;height:10.8px;background:#fff;border-bottom:1px solid #e4e4e4"></div>
<div class="a" style="left:91px;top:310px;width:1px;height:10.8px;background:#e3e3e3"></div>
<div class="a" style="left:199px;top:310px;width:1px;height:10.8px;background:#e3e3e3"></div>
<div class="a" style="left:253px;top:310px;width:1px;height:10.8px;background:#e3e3e3"></div>
<div class="a" style="left:294px;top:310px;width:1px;height:10.8px;background:#e3e3e3"></div>
<div class="a" style="left:348.5px;top:310px;width:1px;height:10.8px;background:#e3e3e3"></div>
<div class="a" style="left:408px;top:310px;width:1px;height:10.8px;background:#e3e3e3"></div>
<div class="a" style="left:468px;top:310px;width:1px;height:10.8px;background:#e3e3e3"></div>
<div class="a" style="left:527px;top:310px;width:1px;height:10.8px;background:#e3e3e3"></div>
<div class="a" style="left:587px;top:310px;width:1px;height:10.8px;background:#e3e3e3"></div>
<div class="a" style="left:647.5px;top:310px;width:1px;height:10.8px;background:#e3e3e3"></div>
<div class="a" style="left:15.5px;top:311px;width:6.5px;height:8px;background:linear-gradient(135deg,#fff,#e8e8e8);border:1px solid #8a8a8a;border-radius:1px 3px 1px 1px"></div><div class="a" style="left:19.3px;top:315.6px;width:3.8px;height:3.8px;background:radial-gradient(circle at 40% 40%,#6ec0ff,#1a6fc8);border-radius:50%"></div>
<div class="t" style="left:25px;top:310.9px;font-size:7px;color:#111;transform:scaleX(0.86);transform-origin:0 50%;">897070692</div>
<div class="t" style="right:553.2px;top:310.9px;font-size:7px;color:#111;transform:scaleX(0.86);transform-origin:100% 50%;">2019.04.04 16:11:01</div>
<div class="t" style="right:499px;top:310.9px;font-size:7px;color:#111;transform:scaleX(0.86);transform-origin:100% 50%;">buy</div>
<div class="t" style="right:457.5px;top:310.9px;font-size:7px;color:#111;transform:scaleX(0.86);transform-origin:100% 50%;">1.00</div>
<div class="t" style="right:403.8px;top:310.9px;font-size:7px;color:#111;transform:scaleX(0.86);transform-origin:100% 50%;">eurgbp</div>
<div class="t" style="right:343.8px;top:310.9px;font-size:7px;color:#111;transform:scaleX(0.86);transform-origin:100% 50%;">0.8559</div>
<div class="t" style="right:284.5px;top:310.9px;font-size:7px;color:#111;transform:scaleX(0.86);transform-origin:100% 50%;">0.0000</div>
<div class="t" style="right:224.79999999999995px;top:310.9px;font-size:7px;color:#111;transform:scaleX(0.86);transform-origin:100% 50%;">0.0000</div>
<div class="t" style="right:164.20000000000005px;top:310.9px;font-size:7px;color:#111;transform:scaleX(0.86);transform-origin:100% 50%;">0.8582</div>
<div class="t" style="right:104.20000000000005px;top:310.9px;font-size:7px;color:#111;transform:scaleX(0.86);transform-origin:100% 50%;">0.00</div>
<div class="t" style="right:19.5px;top:310.9px;font-size:7px;color:#111;transform:scaleX(0.86);transform-origin:100% 50%;">30.07</div>
<div class="t" style="left:734.5px;top:310.4px;font-size:10px;color:#8a8a8a;transform:scaleX(1);transform-origin:0 50%;">×</div>
<div class="a" style="left:15px;top:320.8px;width:730px;height:10.8px;background:#3399ff;border-bottom:1px solid #3399ff"></div>
<div class="a" style="left:91px;top:320.8px;width:1px;height:10.8px;background:#6fb5ff"></div>
<div class="a" style="left:15.5px;top:321.8px;width:6.5px;height:8px;background:linear-gradient(135deg,#fff,#e8e8e8);border:1px solid #8a8a8a;border-radius:1px 3px 1px 1px"></div><div class="a" style="left:19.3px;top:326.40000000000003px;width:3.8px;height:3.8px;background:radial-gradient(circle at 40% 40%,#6ec0ff,#1a6fc8);border-radius:50%"></div>
<div class="t" style="left:25px;top:321.7px;font-size:7px;color:#fff;transform:scaleX(0.86);transform-origin:0 50%;">897070695</div>
<div class="t" style="right:553.2px;top:321.7px;font-size:7px;color:#fff;transform:scaleX(0.86);transform-origin:100% 50%;">2019.04.04 16:11:04</div>
<div class="t" style="right:499px;top:321.7px;font-size:7px;color:#fff;transform:scaleX(0.86);transform-origin:100% 50%;">buy</div>
<div class="t" style="right:457.5px;top:321.7px;font-size:7px;color:#fff;transform:scaleX(0.86);transform-origin:100% 50%;">1.00</div>
<div class="t" style="right:403.8px;top:321.7px;font-size:7px;color:#fff;transform:scaleX(0.86);transform-origin:100% 50%;">eurgbp</div>
<div class="t" style="right:343.8px;top:321.7px;font-size:7px;color:#fff;transform:scaleX(0.86);transform-origin:100% 50%;">0.8559</div>
<div class="t" style="right:284.5px;top:321.7px;font-size:7px;color:#fff;transform:scaleX(0.86);transform-origin:100% 50%;">0.0000</div>
<div class="t" style="right:224.79999999999995px;top:321.7px;font-size:7px;color:#fff;transform:scaleX(0.86);transform-origin:100% 50%;">0.0000</div>
<div class="t" style="right:164.20000000000005px;top:321.7px;font-size:7px;color:#fff;transform:scaleX(0.86);transform-origin:100% 50%;">0.8582</div>
<div class="t" style="right:104.20000000000005px;top:321.7px;font-size:7px;color:#fff;transform:scaleX(0.86);transform-origin:100% 50%;">0.00</div>
<div class="t" style="right:19.5px;top:321.7px;font-size:7px;color:#fff;transform:scaleX(0.86);transform-origin:100% 50%;">30.07</div>
<div class="t" style="left:734.5px;top:321.2px;font-size:10px;color:#8aa0b5;transform:scaleX(1);transform-origin:0 50%;">×</div>
<div class="a" style="left:15px;top:331.6px;width:730px;height:10.8px;background:#fff;border-bottom:1px solid #e4e4e4"></div>
<div class="a" style="left:91px;top:331.6px;width:1px;height:10.8px;background:#e3e3e3"></div>
<div class="a" style="left:199px;top:331.6px;width:1px;height:10.8px;background:#e3e3e3"></div>
<div class="a" style="left:253px;top:331.6px;width:1px;height:10.8px;background:#e3e3e3"></div>
<div class="a" style="left:294px;top:331.6px;width:1px;height:10.8px;background:#e3e3e3"></div>
<div class="a" style="left:348.5px;top:331.6px;width:1px;height:10.8px;background:#e3e3e3"></div>
<div class="a" style="left:408px;top:331.6px;width:1px;height:10.8px;background:#e3e3e3"></div>
<div class="a" style="left:468px;top:331.6px;width:1px;height:10.8px;background:#e3e3e3"></div>
<div class="a" style="left:527px;top:331.6px;width:1px;height:10.8px;background:#e3e3e3"></div>
<div class="a" style="left:587px;top:331.6px;width:1px;height:10.8px;background:#e3e3e3"></div>
<div class="a" style="left:647.5px;top:331.6px;width:1px;height:10.8px;background:#e3e3e3"></div>
<div class="a" style="left:15.5px;top:332.6px;width:6.5px;height:8px;background:linear-gradient(135deg,#fff,#e8e8e8);border:1px solid #8a8a8a;border-radius:1px 3px 1px 1px"></div><div class="a" style="left:19.3px;top:337.20000000000005px;width:3.8px;height:3.8px;background:radial-gradient(circle at 40% 40%,#6ec0ff,#1a6fc8);border-radius:50%"></div>
<div class="t" style="left:25px;top:332.5px;font-size:7px;color:#111;transform:scaleX(0.86);transform-origin:0 50%;">897070698</div>
<div class="t" style="right:553.2px;top:332.5px;font-size:7px;color:#111;transform:scaleX(0.86);transform-origin:100% 50%;">2019.04.04 16:11:06</div>
<div class="t" style="right:499px;top:332.5px;font-size:7px;color:#111;transform:scaleX(0.86);transform-origin:100% 50%;">buy</div>
<div class="t" style="right:457.5px;top:332.5px;font-size:7px;color:#111;transform:scaleX(0.86);transform-origin:100% 50%;">1.00</div>
<div class="t" style="right:403.8px;top:332.5px;font-size:7px;color:#111;transform:scaleX(0.86);transform-origin:100% 50%;">eurgbp</div>
<div class="t" style="right:343.8px;top:332.5px;font-size:7px;color:#111;transform:scaleX(0.86);transform-origin:100% 50%;">0.8559</div>
<div class="t" style="right:284.5px;top:332.5px;font-size:7px;color:#111;transform:scaleX(0.86);transform-origin:100% 50%;">0.0000</div>
<div class="t" style="right:224.79999999999995px;top:332.5px;font-size:7px;color:#111;transform:scaleX(0.86);transform-origin:100% 50%;">0.0000</div>
<div class="t" style="right:164.20000000000005px;top:332.5px;font-size:7px;color:#111;transform:scaleX(0.86);transform-origin:100% 50%;">0.8582</div>
<div class="t" style="right:104.20000000000005px;top:332.5px;font-size:7px;color:#111;transform:scaleX(0.86);transform-origin:100% 50%;">0.00</div>
<div class="t" style="right:19.5px;top:332.5px;font-size:7px;color:#111;transform:scaleX(0.86);transform-origin:100% 50%;">30.07</div>
<div class="t" style="left:734.5px;top:332.0px;font-size:10px;color:#8a8a8a;transform:scaleX(1);transform-origin:0 50%;">×</div>
<div class="a" style="left:15px;top:342.4px;width:730px;height:10.8px;background:#ececec;border-bottom:1px solid #e4e4e4"></div>
<div class="a" style="left:91px;top:342.4px;width:1px;height:10.8px;background:#e3e3e3"></div>
<div class="a" style="left:199px;top:342.4px;width:1px;height:10.8px;background:#e3e3e3"></div>
<div class="a" style="left:253px;top:342.4px;width:1px;height:10.8px;background:#e3e3e3"></div>
<div class="a" style="left:294px;top:342.4px;width:1px;height:10.8px;background:#e3e3e3"></div>
<div class="a" style="left:348.5px;top:342.4px;width:1px;height:10.8px;background:#e3e3e3"></div>
<div class="a" style="left:408px;top:342.4px;width:1px;height:10.8px;background:#e3e3e3"></div>
<div class="a" style="left:468px;top:342.4px;width:1px;height:10.8px;background:#e3e3e3"></div>
<div class="a" style="left:527px;top:342.4px;width:1px;height:10.8px;background:#e3e3e3"></div>
<div class="a" style="left:587px;top:342.4px;width:1px;height:10.8px;background:#e3e3e3"></div>
<div class="a" style="left:647.5px;top:342.4px;width:1px;height:10.8px;background:#e3e3e3"></div>
<div class="a" style="left:15.5px;top:343.4px;width:6.5px;height:8px;background:linear-gradient(135deg,#fff,#e8e8e8);border:1px solid #8a8a8a;border-radius:1px 3px 1px 1px"></div><div class="a" style="left:19.3px;top:348.0px;width:3.8px;height:3.8px;background:radial-gradient(circle at 40% 40%,#6ec0ff,#1a6fc8);border-radius:50%"></div>
<div class="t" style="left:25px;top:343.29999999999995px;font-size:7px;color:#111;transform:scaleX(0.86);transform-origin:0 50%;">897070700</div>
<div class="t" style="right:553.2px;top:343.29999999999995px;font-size:7px;color:#111;transform:scaleX(0.86);transform-origin:100% 50%;">2019.04.04 16:11:09</div>
<div class="t" style="right:499px;top:343.29999999999995px;font-size:7px;color:#111;transform:scaleX(0.86);transform-origin:100% 50%;">buy</div>
<div class="t" style="right:457.5px;top:343.29999999999995px;font-size:7px;color:#111;transform:scaleX(0.86);transform-origin:100% 50%;">1.00</div>
<div class="t" style="right:403.8px;top:343.29999999999995px;font-size:7px;color:#111;transform:scaleX(0.86);transform-origin:100% 50%;">eurgbp</div>
<div class="t" style="right:343.8px;top:343.29999999999995px;font-size:7px;color:#111;transform:scaleX(0.86);transform-origin:100% 50%;">0.8559</div>
<div class="t" style="right:284.5px;top:343.29999999999995px;font-size:7px;color:#111;transform:scaleX(0.86);transform-origin:100% 50%;">0.0000</div>
<div class="t" style="right:224.79999999999995px;top:343.29999999999995px;font-size:7px;color:#111;transform:scaleX(0.86);transform-origin:100% 50%;">0.0000</div>
<div class="t" style="right:164.20000000000005px;top:343.29999999999995px;font-size:7px;color:#111;transform:scaleX(0.86);transform-origin:100% 50%;">0.8582</div>
<div class="t" style="right:104.20000000000005px;top:343.29999999999995px;font-size:7px;color:#111;transform:scaleX(0.86);transform-origin:100% 50%;">0.00</div>
<div class="t" style="right:19.5px;top:343.29999999999995px;font-size:7px;color:#111;transform:scaleX(0.86);transform-origin:100% 50%;">30.07</div>
<div class="t" style="left:734.5px;top:342.79999999999995px;font-size:10px;color:#8a8a8a;transform:scaleX(1);transform-origin:0 50%;">×</div>
<div class="a" style="left:15px;top:353.2px;width:730px;height:10.8px;background:#fff;border-bottom:1px solid #e4e4e4"></div>
<div class="a" style="left:91px;top:353.2px;width:1px;height:10.8px;background:#e3e3e3"></div>
<div class="a" style="left:199px;top:353.2px;width:1px;height:10.8px;background:#e3e3e3"></div>
<div class="a" style="left:253px;top:353.2px;width:1px;height:10.8px;background:#e3e3e3"></div>
<div class="a" style="left:294px;top:353.2px;width:1px;height:10.8px;background:#e3e3e3"></div>
<div class="a" style="left:348.5px;top:353.2px;width:1px;height:10.8px;background:#e3e3e3"></div>
<div class="a" style="left:408px;top:353.2px;width:1px;height:10.8px;background:#e3e3e3"></div>
<div class="a" style="left:468px;top:353.2px;width:1px;height:10.8px;background:#e3e3e3"></div>
<div class="a" style="left:527px;top:353.2px;width:1px;height:10.8px;background:#e3e3e3"></div>
<div class="a" style="left:587px;top:353.2px;width:1px;height:10.8px;background:#e3e3e3"></div>
<div class="a" style="left:647.5px;top:353.2px;width:1px;height:10.8px;background:#e3e3e3"></div>
<div class="a" style="left:15.5px;top:354.2px;width:6.5px;height:8px;background:linear-gradient(135deg,#fff,#e8e8e8);border:1px solid #8a8a8a;border-radius:1px 3px 1px 1px"></div><div class="a" style="left:19.3px;top:358.8px;width:3.8px;height:3.8px;background:radial-gradient(circle at 40% 40%,#6ec0ff,#1a6fc8);border-radius:50%"></div>
<div class="t" style="left:25px;top:354.09999999999997px;font-size:7px;color:#111;transform:scaleX(0.86);transform-origin:0 50%;">897070703</div>
<div class="t" style="right:553.2px;top:354.09999999999997px;font-size:7px;color:#111;transform:scaleX(0.86);transform-origin:100% 50%;">2019.04.04 16:11:11</div>
<div class="t" style="right:499px;top:354.09999999999997px;font-size:7px;color:#111;transform:scaleX(0.86);transform-origin:100% 50%;">buy</div>
<div class="t" style="right:457.5px;top:354.09999999999997px;font-size:7px;color:#111;transform:scaleX(0.86);transform-origin:100% 50%;">1.00</div>
<div class="t" style="right:403.8px;top:354.09999999999997px;font-size:7px;color:#111;transform:scaleX(0.86);transform-origin:100% 50%;">eurgbp</div>
<div class="t" style="right:343.8px;top:354.09999999999997px;font-size:7px;color:#111;transform:scaleX(0.86);transform-origin:100% 50%;">0.8559</div>
<div class="t" style="right:284.5px;top:354.09999999999997px;font-size:7px;color:#111;transform:scaleX(0.86);transform-origin:100% 50%;">0.0000</div>
<div class="t" style="right:224.79999999999995px;top:354.09999999999997px;font-size:7px;color:#111;transform:scaleX(0.86);transform-origin:100% 50%;">0.0000</div>
<div class="t" style="right:164.20000000000005px;top:354.09999999999997px;font-size:7px;color:#111;transform:scaleX(0.86);transform-origin:100% 50%;">0.8582</div>
<div class="t" style="right:104.20000000000005px;top:354.09999999999997px;font-size:7px;color:#111;transform:scaleX(0.86);transform-origin:100% 50%;">0.00</div>
<div class="t" style="right:19.5px;top:354.09999999999997px;font-size:7px;color:#111;transform:scaleX(0.86);transform-origin:100% 50%;">30.07</div>
<div class="t" style="left:734.5px;top:353.59999999999997px;font-size:10px;color:#8a8a8a;transform:scaleX(1);transform-origin:0 50%;">×</div>
<div class="a" style="left:15px;top:364px;width:730px;height:10.6px;background:#d4d4d4"></div>
<div class="a" style="left:15.5px;top:365.8px;width:6px;height:6.6px;background:#fff;border:1px solid #8a8a8a"></div><div class="a" style="left:17.3px;top:367.6px;width:3px;height:3px;background:#18a018;transform:rotate(45deg)"></div>
<div class="t" style="left:26px;top:365.2px;font-size:7px;color:#111;transform:scaleX(0.92);transform-origin:0 50%;;font-weight:bold">Баланс: 10 340.60 USD&nbsp; Средства: 10 490.95&nbsp; Маржа: 112.18&nbsp; Свободная маржа: 10 378.77&nbsp; Уровень: 9351.97%</div>
<div class="t" style="right:20px;top:365.4px;font-size:7.2px;color:#111;transform:scaleX(0.97);transform-origin:100% 50%;;font-weight:bold">150.35</div>
<div class="a" style="left:14px;top:374.6px;width:732px;height:3px;background:#f7f7f7"></div>
<div class="a" style="left:14px;top:377.4px;width:732px;height:1px;background:#a0a0a0"></div>
<div class="a" style="left:14px;top:378.4px;width:732px;height:10.2px;background:#e9e9e9"></div>
<div class="a" style="left:14px;top:377.4px;width:41px;height:11.6px;background:#fff;border:1px solid #6a6a6a;border-top:none;border-right-width:1.5px;border-bottom-width:1.5px"></div>
<div class="t" style="left:20px;top:379px;font-size:7px;color:#111;transform:scaleX(0.94);transform-origin:0 50%;">Торговля</div>
<div class="t" style="left:59.3px;top:379px;font-size:7px;color:#6e6e6e;transform:scaleX(0.94);transform-origin:0 50%;">Активы</div>
<div class="t" style="left:92.7px;top:379px;font-size:7px;color:#6e6e6e;transform:scaleX(0.94);transform-origin:0 50%;">История Счета</div>
<div class="t" style="left:149.2px;top:379px;font-size:7px;color:#6e6e6e;transform:scaleX(0.94);transform-origin:0 50%;">Новости</div>
<div class="t" style="left:186px;top:379px;font-size:7px;color:#6e6e6e;transform:scaleX(0.94);transform-origin:0 50%;">Алерты</div>
<div class="t" style="left:220px;top:379px;font-size:7px;color:#6e6e6e;transform:scaleX(0.94);transform-origin:0 50%;">Почта</div>
<div class="t" style="left:253.2px;top:379px;font-size:7px;color:#6e6e6e;transform:scaleX(0.94);transform-origin:0 50%;">Маркет</div>
<div class="t" style="left:297.2px;top:379px;font-size:7px;color:#6e6e6e;transform:scaleX(0.94);transform-origin:0 50%;">Сигналы</div>
<div class="t" style="left:334.3px;top:379px;font-size:7px;color:#6e6e6e;transform:scaleX(0.94);transform-origin:0 50%;">Статьи</div>
<div class="t" style="left:365.5px;top:379px;font-size:7px;color:#6e6e6e;transform:scaleX(0.94);transform-origin:0 50%;">Библиотека</div>
<div class="t" style="left:411.6px;top:379px;font-size:7px;color:#6e6e6e;transform:scaleX(0.94);transform-origin:0 50%;">Эксперты</div>
<div class="t" style="left:452.1px;top:379px;font-size:7px;color:#6e6e6e;transform:scaleX(0.94);transform-origin:0 50%;">Журнал</div>
<div class="a" style="left:87px;top:380.5px;width:1px;height:7px;background:#a8a8a8"></div>
<div class="a" style="left:144px;top:380.5px;width:1px;height:7px;background:#a8a8a8"></div>
<div class="a" style="left:181px;top:380.5px;width:1px;height:7px;background:#a8a8a8"></div>
<div class="a" style="left:215px;top:380.5px;width:1px;height:7px;background:#a8a8a8"></div>
<div class="a" style="left:248px;top:380.5px;width:1px;height:7px;background:#a8a8a8"></div>
<div class="a" style="left:291px;top:380.5px;width:1px;height:7px;background:#a8a8a8"></div>
<div class="a" style="left:329px;top:380.5px;width:1px;height:7px;background:#a8a8a8"></div>
<div class="a" style="left:361px;top:380.5px;width:1px;height:7px;background:#a8a8a8"></div>
<div class="a" style="left:406px;top:380.5px;width:1px;height:7px;background:#a8a8a8"></div>
<div class="a" style="left:447px;top:380.5px;width:1px;height:7px;background:#a8a8a8"></div>
<div class="a" style="left:482px;top:380.5px;width:1px;height:7px;background:#a8a8a8"></div>
<div class="t" style="left:239.5px;top:380.5px;font-size:5px;color:#e02020;transform:scaleX(0.86);transform-origin:0 50%;;font-weight:bold">7</div>
<div class="t" style="left:276.4px;top:381px;font-size:5px;color:#e02020;transform:scaleX(0.86);transform-origin:0 50%;;font-weight:bold">110</div>
<div class="a" style="left:4px;top:391px;width:742px;height:1px;background:#a0a0a0"></div>
<div class="a" style="left:4px;top:392px;width:742px;height:8px;background:#f0f0f0"></div>
<div class="t" style="left:7px;top:394.8px;font-size:7px;color:#222;transform:scaleX(0.88);transform-origin:0 50%;">Для вызова справки нажмите F1</div>
<div class="a" style="left:354px;top:393px;width:1px;height:8px;background:#c8c8c8"></div>
<div class="a" style="left:419px;top:393px;width:1px;height:8px;background:#c8c8c8"></div>
<div class="a" style="left:475px;top:393px;width:1px;height:8px;background:#c8c8c8"></div>
<div class="a" style="left:511px;top:393px;width:1px;height:8px;background:#c8c8c8"></div>
<div class="a" style="left:552px;top:393px;width:1px;height:8px;background:#c8c8c8"></div>
<div class="a" style="left:589px;top:393px;width:1px;height:8px;background:#c8c8c8"></div>
<div class="a" style="left:628px;top:393px;width:1px;height:8px;background:#c8c8c8"></div>
<div class="a" style="left:664px;top:393px;width:1px;height:8px;background:#c8c8c8"></div>
<div class="t" style="left:357.3px;top:394.8px;font-size:7px;color:#222;transform:scaleX(0.86);transform-origin:0 50%;">Default</div>
<div class="t" style="left:421.3px;top:394.8px;font-size:7px;color:#222;transform:scaleX(0.86);transform-origin:0 50%;">2019.04.04 05:30</div>
<div class="t" style="left:477.3px;top:394.8px;font-size:7px;color:#222;transform:scaleX(0.86);transform-origin:0 50%;">O: 0.8532</div>
<div class="t" style="left:514.7px;top:394.8px;font-size:7px;color:#222;transform:scaleX(0.86);transform-origin:0 50%;">H: 0.8533</div>
<div class="t" style="left:556px;top:394.8px;font-size:7px;color:#222;transform:scaleX(0.86);transform-origin:0 50%;">L: 0.8528</div>
<div class="t" style="left:592.5px;top:394.8px;font-size:7px;color:#222;transform:scaleX(0.86);transform-origin:0 50%;">C: 0.8529</div>
<div class="t" style="left:630.7px;top:394.8px;font-size:7px;color:#222;transform:scaleX(0.86);transform-origin:0 50%;">V: 34</div>
<div class="t" style="left:681.3px;top:394.8px;font-size:7px;color:#222;transform:scaleX(0.86);transform-origin:0 50%;">1024/4 kb</div>
<div class="a" style="left:667px;top:395px;width:13px;height:6px;background:linear-gradient(90deg,#5aa02a,#2a78c8)"></div>
<div class="a" style="left:0px;top:400px;width:750px;height:22px;background:linear-gradient(#8fa9c4 0,#5a7898 10%,#3f5f84 40%,#2c4a6e 100%)"></div>
<div class="a" style="left:0px;top:400.5px;width:750px;height:1px;background:#1e2c3c"></div>
<div class="a" style="left:0px;top:401.5px;width:750px;height:1px;background:rgba(220,235,250,0.5)"></div>
<div class="a" style="left:0px;top:402px;width:40px;height:20px;background:linear-gradient(90deg,#1e3048,rgba(30,48,72,0))"></div>
<div class="a" style="left:230px;top:402px;width:90px;height:20px;background:radial-gradient(ellipse at 40% 70%,rgba(15,30,50,0.75) 0,rgba(20,40,70,0.4) 50%,transparent 75%)"></div>
<div class="a" style="left:290px;top:401px;width:130px;height:21px;background:radial-gradient(ellipse at 50% 40%,rgba(185,210,232,0.75) 0,rgba(150,180,210,0.4) 45%,transparent 72%)"></div>
<div class="a" style="left:400px;top:401px;width:90px;height:21px;background:radial-gradient(ellipse at 50% 55%,rgba(10,22,40,0.9) 0,rgba(20,40,70,0.55) 45%,transparent 72%)"></div>
<div class="a" style="left:600px;top:404px;width:60px;height:18px;background:radial-gradient(ellipse at 40% 80%,rgba(15,28,48,0.7) 0,transparent 70%)"></div>
<div class="a" style="left:5px;top:403px;width:20px;height:20px;background:radial-gradient(circle at 50% 35%,#8adcff 0,#3a8fd8 40%,#0d3f80 72%,#0a2550 100%);border-radius:50%;border:1px solid #0a2040;box-shadow:0 0 3px rgba(140,200,255,0.6)"></div>
<div class="a" style="left:10.5px;top:407.5px;width:4.5px;height:4.5px;background:#f25022;border-radius:1px 0 0 0"></div><div class="a" style="left:15.5px;top:407.5px;width:4.5px;height:4.5px;background:#7fba00;border-radius:0 1px 0 0"></div><div class="a" style="left:10.5px;top:412.5px;width:4.5px;height:4.5px;background:#00a4ef"></div><div class="a" style="left:15.5px;top:412.5px;width:4.5px;height:4.5px;background:#ffb900"></div>
<svg class="a" style="left:38px;top:402px" width="22" height="20"><ellipse cx="11" cy="10.5" rx="9.8" ry="3.6" fill="none" stroke="#f2c02a" stroke-width="1.4" transform="rotate(-32 11 10.5)"/><path d="M16.8 12.6A6 6 0 1 1 17.2 9.6" fill="none" stroke="#2a9ae8" stroke-width="3.2"/><path d="M6.5 10.3H17.5" stroke="#2a9ae8" stroke-width="2.2"/><path d="M3 16Q8 14 20 4" fill="none" stroke="#f2c02a" stroke-width="1.4"/></svg>
<div class="a" style="left:74px;top:404px;width:17px;height:15px;background:linear-gradient(#fbeebb,#e9c764);border:1px solid #b49030;border-radius:1px"></div>
<div class="a" style="left:75px;top:405px;width:15px;height:3px;background:#f6f0e0"></div>
<div class="a" style="left:77px;top:411px;width:11px;height:7px;background:#7cc0ee;border:1px solid #3f86c0"></div>
<div class="a" style="left:109px;top:405px;width:14px;height:14px;background:linear-gradient(#9cc8ee,#4f8fcf);border:1px solid #2f5f95"></div>
<div class="a" style="left:111px;top:407px;width:10px;height:10px;background:#ff8a1a;border-radius:50%;border:1px solid #fff"></div>
<svg class="a" style="left:113.5px;top:409px" width="6" height="6"><path d="M0.5 0.5L5.5 3L0.5 5.5Z" fill="#fff"/></svg>
<div class="a" style="left:135px;top:401px;width:32px;height:21px;background:linear-gradient(rgba(200,220,240,0.55),rgba(140,170,200,0.35) 50%,rgba(120,150,185,0.3));border:1px solid rgba(30,50,75,0.7);box-shadow:inset 0 0 0 1px rgba(220,235,250,0.4);border-radius:2px"></div>
<div class="a" style="left:169px;top:401px;width:32px;height:21px;background:linear-gradient(#d4dfea,#b3c4d6 50%,#9fb3c8);border:1px solid rgba(30,50,75,0.7);box-shadow:inset 0 0 0 1px rgba(240,245,250,0.6);border-radius:2px"></div>
<div class="a" style="left:203px;top:401px;width:32px;height:21px;background:linear-gradient(rgba(200,220,240,0.55),rgba(140,170,200,0.35) 50%,rgba(120,150,185,0.3));border:1px solid rgba(30,50,75,0.7);box-shadow:inset 0 0 0 1px rgba(220,235,250,0.4);border-radius:2px"></div>
<div class="a" style="left:143px;top:404px;width:17px;height:17px;background:radial-gradient(circle at 50% 40%,#fff 0,#f0f0f0 70%,#d8d8d8 100%);border-radius:50%"></div>
<svg class="a" style="left:146px;top:406px" width="12" height="13"><path d="M2 1.5L6 7V12M10 1.5L6 7" stroke="#e81818" stroke-width="2.2" fill="none"/></svg>
<svg class="a" style="left:175px;top:402px" width="20" height="20"><circle cx="10" cy="8" r="5.6" fill="none" stroke="#e81010" stroke-width="3.2" stroke-dasharray="2.1 1.4"/><circle cx="10" cy="8" r="4" fill="none" stroke="#e81010" stroke-width="1.6"/><circle cx="10" cy="8" r="1.6" fill="#e81010"/><path d="M7.5 10V18M12.5 10V18M10 9V16" stroke="#e81010" stroke-width="1.6"/></svg>
<svg class="a" style="left:208px;top:403px" width="22" height="19"><path d="M2 11L13 4L20 9L9 17Z" fill="#3f86d8" stroke="#1f4f95"/><circle cx="10" cy="8" r="4.5" fill="#d8ecff" stroke="#2a2a40" stroke-width="1.3"/><path d="M13.5 11.5L18 16" stroke="#e86a10" stroke-width="2"/></svg>
<div class="t" style="left:468.4px;top:407.4px;font-size:7px;color:#fff;transform:scaleX(0.88);transform-origin:0 50%;">Адрес</div>
<div class="a" style="left:489px;top:405.8px;width:112px;height:11.4px;background:#fff"></div>
<svg class="a" style="left:591px;top:409px" width="6" height="4"><path d="M0 0H6L3 3.5Z" fill="#000"/></svg>
<div class="a" style="left:601px;top:405.8px;width:12.6px;height:11.4px;background:#fff;border-left:1px solid #ccc"></div>
<svg class="a" style="left:602px;top:406px" width="11" height="11"><path d="M2 4.5H8.5L6.5 2.5M9 6.5H2.5L4.5 8.5" stroke="#2a7ad8" stroke-width="1.3" fill="none"/></svg>
<div class="t" style="left:620px;top:406px;font-size:7px;color:#e8eef5;transform:scaleX(0.88);transform-origin:0 50%;">RU</div>
<svg class="a" style="left:636px;top:410px" width="6" height="4"><path d="M0 3.5H6L3 0Z" fill="#fff"/></svg>
<div class="a" style="left:649px;top:405px;width:7px;height:9px;background:#e8e8e8;border:1px solid #777"></div><div class="a" style="left:653px;top:409px;width:5px;height:5px;background:#e02020;border-radius:50%;border:1px solid #fff"></div>
<div class="a" style="left:661px;top:405px;width:7px;height:9px;background:#d8d8d8;border:1px solid #777;border-radius:1px"></div>
<svg class="a" style="left:674px;top:406px" width="10" height="9"><path d="M1 8H2.5V6.5H1ZM3.5 8H5V5H3.5ZM6 8H7.5V3H6ZM8.5 8H10V1H8.5Z" fill="#fff"/></svg>
<svg class="a" style="left:687px;top:405px" width="10" height="10"><path d="M1 3.5H3L6 1V9L3 6.5H1Z" fill="#fff"/><path d="M7.5 3Q9 5 7.5 7" stroke="#fff" fill="none"/></svg>
<div class="t" style="left:714px;top:403.3px;font-size:7px;color:#fff;transform:scaleX(0.88);transform-origin:0 50%;">18:47</div>
<div class="t" style="left:705.5px;top:412.6px;font-size:7px;color:#fff;transform:scaleX(0.88);transform-origin:0 50%;">04.04.2019</div>
<div class="a" style="left:743px;top:401px;width:7px;height:21px;background:linear-gradient(90deg,rgba(180,200,220,0.3),rgba(220,230,240,0.45));border-left:1px solid rgba(30,50,75,0.7)"></div>
<div class="a" style="left:76px;top:0px;width:319px;height:57px;background:linear-gradient(#e6f1fb,#d3e4f5 25%,#dbe9f6 60%,#e4eef8);border:1px solid #9aa8b8;border-top-color:#505a66;border-left-color:#c0d0e0;box-shadow:0.5px 0.5px 1px rgba(0,0,0,0.3)"></div>
<div class="t" style="left:133px;top:3.5px;font-size:7px;color:rgba(60,85,120,0.35);transform:scaleX(0.9);transform-origin:0 50%;;-webkit-text-stroke:0;filter:blur(1.1px)">монстрационный Счет - [EURGBP,M30]</div>
<div class="a" style="left:270px;top:2px;width:40px;height:12px;background:radial-gradient(ellipse,rgba(120,150,190,0.35),transparent 70%)"></div>
<div class="t" style="left:81px;top:3.5px;font-size:7.6px;color:#1e2a38;transform:scaleX(0.88);transform-origin:0 50%;">Окно котировок</div>
<div class="a" style="left:383.4px;top:3.5px;width:8.2px;height:8px;background:linear-gradient(#f6f9fc,#dfe7ef);border:1px solid #8a98a8;border-radius:1.5px"></div>
<div class="a" style="left:386px;top:6px;width:3px;height:3px;border:1px solid #8a8a8a"></div>
<div class="a" style="left:80.2px;top:13.2px;width:311px;height:39.8px;background:#000;border:1.6px solid #8c8c8c;border-bottom-color:#c8c8c8;border-right-color:#c8c8c8"></div>
<div class="a" style="left:81px;top:28px;width:300px;height:1px;background:#9a9a9a"></div><div class="a" style="left:81px;top:42px;width:300px;height:1px;background:#9a9a9a"></div>
<div class="a" style="left:216.5px;top:15px;width:1px;height:36px;background:#9a9a9a"></div><div class="a" style="left:298.5px;top:15px;width:1px;height:36px;background:#9a9a9a"></div>
<div class="a" style="left:380px;top:15px;width:11px;height:36.5px;background:#fff;border:1px solid #d0d0d0"></div>
<svg class="a" style="left:382px;top:17px" width="8" height="33"><path d="M2 4.5H6L4 2.5Z" fill="#333"/><path d="M2 28.5H6L4 30.5Z" fill="#333"/></svg>
<div class="a" style="left:381.2px;top:24.9px;width:8.6px;height:8.5px;background:linear-gradient(90deg,#f4f4f4,#d8d8d8);border:1px solid #c0c0c0;border-radius:1px"></div>
<div class="a" style="left:81px;top:15px;width:300px;height:36px;overflow:hidden"><div class="t" style="left:3px;top:1px;font-size:12px;line-height:13px;color:#fff;-webkit-text-stroke:0.3px #fff;transform:scaleX(0.82);transform-origin:0 50%">USDCHF</div><div class="t" style="left:3px;top:14.5px;font-size:12px;line-height:13px;color:#fff;-webkit-text-stroke:0.3px #fff;transform:scaleX(0.82);transform-origin:0 50%">GBPUSD</div><div class="t" style="left:3px;top:28px;font-size:12px;line-height:13px;color:#fff;-webkit-text-stroke:0.3px #fff;transform:scaleX(0.82);transform-origin:0 50%">EURUSD</div><div class="t" style="right:85px;top:1px;font-size:12px;line-height:13px;color:#ff0808;-webkit-text-stroke:0.3px #ff0808;transform:scaleX(0.89);transform-origin:100% 50%">0.9995</div><div class="t" style="right:85px;top:14.5px;font-size:12px;line-height:13px;color:#ff0808;-webkit-text-stroke:0.3px #ff0808;transform:scaleX(0.89);transform-origin:100% 50%">1.3074</div><div class="t" style="right:85px;top:28px;font-size:12px;line-height:13px;color:#ff0808;-webkit-text-stroke:0.3px #ff0808;transform:scaleX(0.89);transform-origin:100% 50%">1.1222</div><div class="t" style="right:2px;top:1px;font-size:12px;line-height:13px;color:#ff0808;-webkit-text-stroke:0.3px #ff0808;transform:scaleX(0.89);transform-origin:100% 50%">0.9998</div><div class="t" style="right:2px;top:14.5px;font-size:12px;line-height:13px;color:#ff0808;-webkit-text-stroke:0.3px #ff0808;transform:scaleX(0.89);transform-origin:100% 50%">1.3077</div><div class="t" style="right:2px;top:28px;font-size:12px;line-height:13px;color:#ff0808;-webkit-text-stroke:0.3px #ff0808;transform:scaleX(0.89);transform-origin:100% 50%">1.1225</div></div>
<svg class="a" style="left:700px;top:376px" width="50" height="46"><g transform="translate(19.8 16.5)"><path d="M6 6L16 15.5" stroke="#fff" stroke-width="8" stroke-linecap="round"/><circle r="11.3" fill="#fff"/><path d="M6 6L16 15.5" stroke="#3a3a3a" stroke-width="4.2" stroke-linecap="round"/><circle r="8.2" fill="#f4f4f4" stroke="#3a3a3a" stroke-width="3"/><path d="M-4 0H4M0 -4V4" stroke="#3a3a3a" stroke-width="2.2"/></g></svg></body></html>
